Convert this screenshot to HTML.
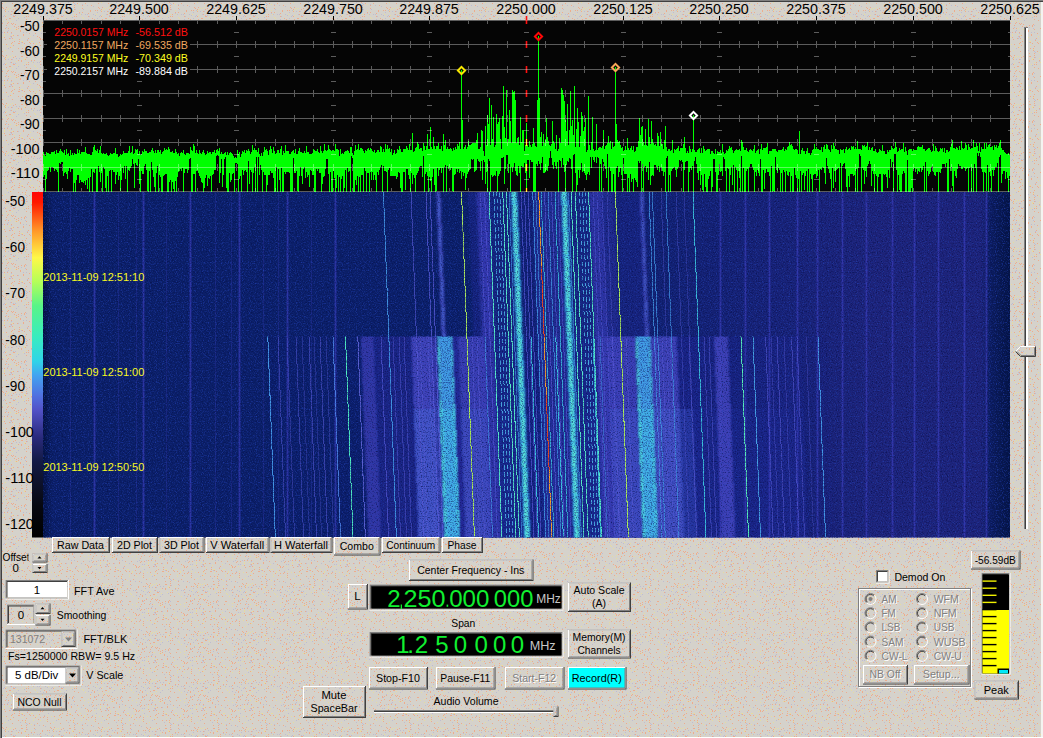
<!DOCTYPE html>
<html><head><meta charset="utf-8"><title>Spectrum</title>
<style>
html,body{margin:0;padding:0;background:#d5d0c8;overflow:hidden}
svg{display:block;font-family:"Liberation Sans",sans-serif}
text{white-space:pre}
</style></head><body>
<svg width="1043" height="738" viewBox="0 0 1043 738">
<defs><pattern id="dz" width="48" height="48" patternUnits="userSpaceOnUse"><rect width="48" height="48" fill="#d5d2cb"/><rect x="25" y="24" width="1" height="1" fill="#eeac8c"/><rect x="12" y="38" width="1" height="1" fill="#eeac8c"/><rect x="11" y="14" width="1" height="1" fill="#eeac8c"/><rect x="15" y="8" width="1" height="1" fill="#eeac8c"/><rect x="5" y="16" width="1" height="1" fill="#eeac8c"/><rect x="46" y="24" width="1" height="1" fill="#eeac8c"/><rect x="33" y="43" width="1" height="1" fill="#eeac8c"/><rect x="44" y="34" width="1" height="1" fill="#eeac8c"/><rect x="5" y="39" width="1" height="1" fill="#eeac8c"/><rect x="31" y="12" width="1" height="1" fill="#eeac8c"/><rect x="26" y="46" width="1" height="1" fill="#eeac8c"/><rect x="39" y="37" width="1" height="1" fill="#eeac8c"/><rect x="13" y="23" width="1" height="1" fill="#eeac8c"/><rect x="24" y="43" width="1" height="1" fill="#eeac8c"/><rect x="13" y="9" width="1" height="1" fill="#eeac8c"/><rect x="29" y="42" width="1" height="1" fill="#eeac8c"/><rect x="11" y="36" width="1" height="1" fill="#eeac8c"/><rect x="21" y="5" width="1" height="1" fill="#eeac8c"/><rect x="45" y="33" width="1" height="1" fill="#eeac8c"/><rect x="43" y="5" width="1" height="1" fill="#eeac8c"/><rect x="30" y="20" width="1" height="1" fill="#eeac8c"/><rect x="25" y="2" width="1" height="1" fill="#eeac8c"/><rect x="17" y="35" width="1" height="1" fill="#eeac8c"/><rect x="0" y="27" width="1" height="1" fill="#eeac8c"/><rect x="34" y="5" width="1" height="1" fill="#eeac8c"/><rect x="29" y="33" width="1" height="1" fill="#eeac8c"/><rect x="29" y="3" width="1" height="1" fill="#eeac8c"/><rect x="22" y="8" width="1" height="1" fill="#eeac8c"/><rect x="13" y="45" width="1" height="1" fill="#eeac8c"/><rect x="10" y="47" width="1" height="1" fill="#eeac8c"/><rect x="28" y="38" width="1" height="1" fill="#eeac8c"/><rect x="11" y="32" width="1" height="1" fill="#eeac8c"/><rect x="42" y="11" width="1" height="1" fill="#eeac8c"/><rect x="2" y="7" width="1" height="1" fill="#eeac8c"/><rect x="1" y="10" width="1" height="1" fill="#eeac8c"/><rect x="30" y="43" width="1" height="1" fill="#eeac8c"/><rect x="26" y="5" width="1" height="1" fill="#eeac8c"/><rect x="27" y="40" width="1" height="1" fill="#eeac8c"/><rect x="5" y="9" width="1" height="1" fill="#eeac8c"/><rect x="19" y="39" width="1" height="1" fill="#eeac8c"/><rect x="0" y="24" width="1" height="1" fill="#eeac8c"/><rect x="21" y="8" width="1" height="1" fill="#eeac8c"/><rect x="33" y="25" width="1" height="1" fill="#eeac8c"/><rect x="12" y="3" width="1" height="1" fill="#eeac8c"/><rect x="40" y="13" width="1" height="1" fill="#eeac8c"/><rect x="28" y="16" width="1" height="1" fill="#eeac8c"/><rect x="34" y="25" width="1" height="1" fill="#eeac8c"/><rect x="8" y="22" width="1" height="1" fill="#eeac8c"/><rect x="44" y="30" width="1" height="1" fill="#eeac8c"/><rect x="3" y="8" width="1" height="1" fill="#eeac8c"/><rect x="47" y="45" width="1" height="1" fill="#eeac8c"/><rect x="38" y="47" width="1" height="1" fill="#eeac8c"/><rect x="9" y="38" width="1" height="1" fill="#eeac8c"/><rect x="26" y="7" width="1" height="1" fill="#eeac8c"/><rect x="6" y="7" width="1" height="1" fill="#eeac8c"/><rect x="9" y="18" width="1" height="1" fill="#eeac8c"/><rect x="11" y="11" width="1" height="1" fill="#eeac8c"/><rect x="26" y="9" width="1" height="1" fill="#eeac8c"/><rect x="13" y="35" width="1" height="1" fill="#eeac8c"/><rect x="20" y="31" width="1" height="1" fill="#eeac8c"/><rect x="14" y="16" width="1" height="1" fill="#eeac8c"/><rect x="7" y="23" width="1" height="1" fill="#eeac8c"/><rect x="11" y="43" width="1" height="1" fill="#eeac8c"/><rect x="4" y="32" width="1" height="1" fill="#eeac8c"/><rect x="18" y="0" width="1" height="1" fill="#eeac8c"/><rect x="37" y="3" width="1" height="1" fill="#eeac8c"/><rect x="21" y="13" width="1" height="1" fill="#eeac8c"/><rect x="24" y="25" width="1" height="1" fill="#eeac8c"/><rect x="21" y="25" width="1" height="1" fill="#eeac8c"/><rect x="24" y="26" width="1" height="1" fill="#eeac8c"/><rect x="23" y="34" width="1" height="1" fill="#eeac8c"/><rect x="5" y="11" width="1" height="1" fill="#eeac8c"/><rect x="2" y="23" width="1" height="1" fill="#eeac8c"/><rect x="46" y="25" width="1" height="1" fill="#eeac8c"/><rect x="28" y="14" width="1" height="1" fill="#eeac8c"/><rect x="19" y="41" width="1" height="1" fill="#eeac8c"/><rect x="14" y="41" width="1" height="1" fill="#eeac8c"/><rect x="46" y="19" width="1" height="1" fill="#eeac8c"/><rect x="6" y="44" width="1" height="1" fill="#eeac8c"/><rect x="46" y="20" width="1" height="1" fill="#eeac8c"/><rect x="43" y="45" width="1" height="1" fill="#eeac8c"/><rect x="15" y="24" width="1" height="1" fill="#eeac8c"/><rect x="18" y="28" width="1" height="1" fill="#eeac8c"/><rect x="5" y="28" width="1" height="1" fill="#eeac8c"/><rect x="26" y="16" width="1" height="1" fill="#eeac8c"/><rect x="18" y="43" width="1" height="1" fill="#eeac8c"/><rect x="20" y="30" width="1" height="1" fill="#eeac8c"/><rect x="34" y="8" width="1" height="1" fill="#eeac8c"/><rect x="16" y="27" width="1" height="1" fill="#eeac8c"/><rect x="18" y="26" width="1" height="1" fill="#eeac8c"/><rect x="42" y="39" width="1" height="1" fill="#eeac8c"/><rect x="10" y="18" width="1" height="1" fill="#eeac8c"/><rect x="43" y="38" width="1" height="1" fill="#eeac8c"/><rect x="39" y="42" width="1" height="1" fill="#eeac8c"/><rect x="45" y="28" width="1" height="1" fill="#eeac8c"/><rect x="12" y="24" width="1" height="1" fill="#eeac8c"/><rect x="21" y="12" width="1" height="1" fill="#eeac8c"/><rect x="22" y="0" width="1" height="1" fill="#eeac8c"/><rect x="42" y="22" width="1" height="1" fill="#eeac8c"/><rect x="44" y="18" width="1" height="1" fill="#eeac8c"/><rect x="12" y="42" width="1" height="1" fill="#eeac8c"/><rect x="42" y="10" width="1" height="1" fill="#eeac8c"/><rect x="40" y="16" width="1" height="1" fill="#eeac8c"/><rect x="42" y="26" width="1" height="1" fill="#eeac8c"/><rect x="14" y="26" width="1" height="1" fill="#eeac8c"/><rect x="22" y="42" width="1" height="1" fill="#eeac8c"/><rect x="25" y="0" width="1" height="1" fill="#eeac8c"/><rect x="7" y="32" width="1" height="1" fill="#eeac8c"/><rect x="34" y="12" width="1" height="1" fill="#eeac8c"/><rect x="0" y="33" width="1" height="1" fill="#eeac8c"/><rect x="19" y="43" width="1" height="1" fill="#eeac8c"/><rect x="47" y="10" width="1" height="1" fill="#eeac8c"/><rect x="32" y="28" width="1" height="1" fill="#eeac8c"/><rect x="13" y="16" width="1" height="1" fill="#eeac8c"/><rect x="47" y="47" width="1" height="1" fill="#eeac8c"/><rect x="26" y="29" width="1" height="1" fill="#eeac8c"/><rect x="35" y="33" width="1" height="1" fill="#eeac8c"/><rect x="40" y="39" width="1" height="1" fill="#eeac8c"/><rect x="40" y="38" width="1" height="1" fill="#eeac8c"/><rect x="18" y="12" width="1" height="1" fill="#eeac8c"/><rect x="47" y="1" width="1" height="1" fill="#eeac8c"/><rect x="6" y="19" width="1" height="1" fill="#eeac8c"/><rect x="4" y="37" width="1" height="1" fill="#eeac8c"/><rect x="2" y="3" width="1" height="1" fill="#eeac8c"/><rect x="26" y="19" width="1" height="1" fill="#eeac8c"/><rect x="23" y="35" width="1" height="1" fill="#eeac8c"/><rect x="40" y="45" width="1" height="1" fill="#eeac8c"/><rect x="37" y="36" width="1" height="1" fill="#eeac8c"/><rect x="6" y="25" width="1" height="1" fill="#eeac8c"/><rect x="25" y="11" width="1" height="1" fill="#eeac8c"/><rect x="16" y="29" width="1" height="1" fill="#eeac8c"/><rect x="8" y="28" width="1" height="1" fill="#eeac8c"/><rect x="44" y="44" width="1" height="1" fill="#eeac8c"/><rect x="35" y="45" width="1" height="1" fill="#eeac8c"/><rect x="11" y="23" width="1" height="1" fill="#eeac8c"/><rect x="16" y="13" width="1" height="1" fill="#e6dca0"/><rect x="17" y="29" width="1" height="1" fill="#e6dca0"/><rect x="36" y="44" width="1" height="1" fill="#e6dca0"/><rect x="24" y="11" width="1" height="1" fill="#e6dca0"/><rect x="30" y="36" width="1" height="1" fill="#e6dca0"/><rect x="40" y="30" width="1" height="1" fill="#e6dca0"/><rect x="4" y="34" width="1" height="1" fill="#e6dca0"/><rect x="15" y="29" width="1" height="1" fill="#e6dca0"/><rect x="33" y="0" width="1" height="1" fill="#e6dca0"/><rect x="7" y="21" width="1" height="1" fill="#e6dca0"/><rect x="31" y="4" width="1" height="1" fill="#e6dca0"/><rect x="21" y="41" width="1" height="1" fill="#e6dca0"/><rect x="46" y="0" width="1" height="1" fill="#e6dca0"/><rect x="36" y="43" width="1" height="1" fill="#e6dca0"/><rect x="34" y="17" width="1" height="1" fill="#e6dca0"/><rect x="40" y="0" width="1" height="1" fill="#e6dca0"/><rect x="37" y="20" width="1" height="1" fill="#e6dca0"/><rect x="10" y="8" width="1" height="1" fill="#e6dca0"/><rect x="3" y="21" width="1" height="1" fill="#e6dca0"/><rect x="32" y="14" width="1" height="1" fill="#e6dca0"/><rect x="35" y="18" width="1" height="1" fill="#e6dca0"/><rect x="10" y="28" width="1" height="1" fill="#e6dca0"/><rect x="3" y="44" width="1" height="1" fill="#e6dca0"/><rect x="26" y="14" width="1" height="1" fill="#e6dca0"/><rect x="12" y="7" width="1" height="1" fill="#e6dca0"/><rect x="31" y="10" width="1" height="1" fill="#e6dca0"/><rect x="17" y="17" width="1" height="1" fill="#e6dca0"/><rect x="42" y="23" width="1" height="1" fill="#e6dca0"/><rect x="4" y="35" width="1" height="1" fill="#e6dca0"/><rect x="12" y="35" width="1" height="1" fill="#e6dca0"/><rect x="11" y="44" width="1" height="1" fill="#e6dca0"/><rect x="22" y="41" width="1" height="1" fill="#e6dca0"/><rect x="47" y="43" width="1" height="1" fill="#e6dca0"/><rect x="7" y="46" width="1" height="1" fill="#e6dca0"/><rect x="8" y="8" width="1" height="1" fill="#e6dca0"/><rect x="9" y="34" width="1" height="1" fill="#e6dca0"/><rect x="5" y="2" width="1" height="1" fill="#e6dca0"/><rect x="32" y="41" width="1" height="1" fill="#e6dca0"/><rect x="24" y="10" width="1" height="1" fill="#e6dca0"/><rect x="22" y="45" width="1" height="1" fill="#e6dca0"/><rect x="14" y="39" width="1" height="1" fill="#e6dca0"/><rect x="38" y="39" width="1" height="1" fill="#e6dca0"/><rect x="10" y="21" width="1" height="1" fill="#e6dca0"/><rect x="40" y="27" width="1" height="1" fill="#e6dca0"/><rect x="12" y="19" width="1" height="1" fill="#e6dca0"/><rect x="11" y="47" width="1" height="1" fill="#e6dca0"/><rect x="7" y="9" width="1" height="1" fill="#e6dca0"/><rect x="31" y="41" width="1" height="1" fill="#e6dca0"/><rect x="33" y="46" width="1" height="1" fill="#e6dca0"/><rect x="0" y="14" width="1" height="1" fill="#e6dca0"/><rect x="6" y="15" width="1" height="1" fill="#e6dca0"/><rect x="36" y="28" width="1" height="1" fill="#e6dca0"/><rect x="46" y="38" width="1" height="1" fill="#e6dca0"/><rect x="5" y="10" width="1" height="1" fill="#e6dca0"/><rect x="23" y="16" width="1" height="1" fill="#e6dca0"/><rect x="20" y="37" width="1" height="1" fill="#e6dca0"/><rect x="2" y="37" width="1" height="1" fill="#e6dca0"/><rect x="25" y="1" width="1" height="1" fill="#e6dca0"/><rect x="19" y="10" width="1" height="1" fill="#bebcd2"/><rect x="8" y="0" width="1" height="1" fill="#bebcd2"/><rect x="18" y="35" width="1" height="1" fill="#bebcd2"/><rect x="18" y="18" width="1" height="1" fill="#bebcd2"/><rect x="7" y="31" width="1" height="1" fill="#bebcd2"/><rect x="27" y="4" width="1" height="1" fill="#bebcd2"/><rect x="2" y="22" width="1" height="1" fill="#bebcd2"/><rect x="10" y="38" width="1" height="1" fill="#bebcd2"/><rect x="43" y="20" width="1" height="1" fill="#bebcd2"/><rect x="21" y="42" width="1" height="1" fill="#bebcd2"/><rect x="20" y="2" width="1" height="1" fill="#bebcd2"/><rect x="24" y="17" width="1" height="1" fill="#bebcd2"/><rect x="39" y="14" width="1" height="1" fill="#bebcd2"/><rect x="35" y="9" width="1" height="1" fill="#bebcd2"/><rect x="44" y="43" width="1" height="1" fill="#bebcd2"/><rect x="1" y="18" width="1" height="1" fill="#bebcd2"/><rect x="47" y="25" width="1" height="1" fill="#bebcd2"/><rect x="26" y="32" width="1" height="1" fill="#bebcd2"/><rect x="45" y="14" width="1" height="1" fill="#bebcd2"/><rect x="11" y="33" width="1" height="1" fill="#bebcd2"/><rect x="26" y="3" width="1" height="1" fill="#bebcd2"/><rect x="13" y="15" width="1" height="1" fill="#bebcd2"/><rect x="41" y="16" width="1" height="1" fill="#bebcd2"/><rect x="10" y="36" width="1" height="1" fill="#bebcd2"/><rect x="6" y="27" width="1" height="1" fill="#bebcd2"/><rect x="0" y="36" width="1" height="1" fill="#bebcd2"/><rect x="1" y="12" width="1" height="1" fill="#bebcd2"/><rect x="8" y="11" width="1" height="1" fill="#bebcd2"/><rect x="40" y="19" width="1" height="1" fill="#bebcd2"/><rect x="3" y="16" width="1" height="1" fill="#bebcd2"/><rect x="11" y="37" width="1" height="1" fill="#bebcd2"/><rect x="27" y="9" width="1" height="1" fill="#bebcd2"/><rect x="0" y="41" width="1" height="1" fill="#bebcd2"/><rect x="2" y="32" width="1" height="1" fill="#bebcd2"/><rect x="25" y="28" width="1" height="1" fill="#bebcd2"/><rect x="4" y="10" width="1" height="1" fill="#bebcd2"/><rect x="37" y="14" width="1" height="1" fill="#bebcd2"/><rect x="21" y="27" width="1" height="1" fill="#bebcd2"/><rect x="8" y="30" width="1" height="1" fill="#bebcd2"/><rect x="39" y="5" width="1" height="1" fill="#bebcd2"/><rect x="23" y="32" width="1" height="1" fill="#bebcd2"/><rect x="10" y="14" width="1" height="1" fill="#bebcd2"/><rect x="46" y="36" width="1" height="1" fill="#bebcd2"/><rect x="31" y="13" width="1" height="1" fill="#bebcd2"/><rect x="45" y="6" width="1" height="1" fill="#bebcd2"/><rect x="27" y="39" width="1" height="1" fill="#bebcd2"/><rect x="12" y="11" width="1" height="1" fill="#bebcd2"/><rect x="47" y="15" width="1" height="1" fill="#bebcd2"/><rect x="16" y="10" width="1" height="1" fill="#bebcd2"/><rect x="41" y="33" width="1" height="1" fill="#bebcd2"/><rect x="43" y="32" width="1" height="1" fill="#bebcd2"/><rect x="34" y="4" width="1" height="1" fill="#bebcd2"/><rect x="15" y="15" width="1" height="1" fill="#bebcd2"/><rect x="33" y="14" width="1" height="1" fill="#bebcd2"/><rect x="26" y="25" width="1" height="1" fill="#bebcd2"/><rect x="33" y="35" width="1" height="1" fill="#bebcd2"/><rect x="4" y="15" width="1" height="1" fill="#bebcd2"/><rect x="16" y="20" width="1" height="1" fill="#bebcd2"/></pattern></defs>
<rect x="0" y="0" width="1043" height="738" fill="url(#dz)"/>
<rect x="0" y="0" width="1043" height="1" fill="#808080"/>
<rect x="0" y="0" width="1" height="738" fill="#808080"/>
<rect x="1" y="1" width="1042" height="1" fill="#404040"/>
<rect x="1" y="1" width="1" height="737" fill="#404040"/>
<rect x="1041" y="2" width="2" height="736" fill="#f4f3f0"/>
<rect x="2" y="737" width="1041" height="1" fill="#ffffff"/>
<g font-size="14.67">
<text x="43" y="14.1" font-size="15.4" fill="#000" text-anchor="middle" textLength="59.6" lengthAdjust="spacingAndGlyphs">2249.375</text>
<rect x="43" y="16" width="1" height="4" fill="#000"/>
<text x="139" y="14.1" font-size="15.4" fill="#000" text-anchor="middle" textLength="59.6" lengthAdjust="spacingAndGlyphs">2249.500</text>
<rect x="139" y="16" width="1" height="4" fill="#000"/>
<text x="236" y="14.1" font-size="15.4" fill="#000" text-anchor="middle" textLength="59.6" lengthAdjust="spacingAndGlyphs">2249.625</text>
<rect x="236" y="16" width="1" height="4" fill="#000"/>
<text x="333" y="14.1" font-size="15.4" fill="#000" text-anchor="middle" textLength="59.6" lengthAdjust="spacingAndGlyphs">2249.750</text>
<rect x="333" y="16" width="1" height="4" fill="#000"/>
<text x="429" y="14.1" font-size="15.4" fill="#000" text-anchor="middle" textLength="59.6" lengthAdjust="spacingAndGlyphs">2249.875</text>
<rect x="429" y="16" width="1" height="4" fill="#000"/>
<text x="526" y="14.1" font-size="15.4" fill="#000" text-anchor="middle" textLength="59.6" lengthAdjust="spacingAndGlyphs">2250.000</text>
<rect x="526" y="16" width="1" height="4" fill="#000"/>
<text x="623" y="14.1" font-size="15.4" fill="#000" text-anchor="middle" textLength="59.6" lengthAdjust="spacingAndGlyphs">2250.125</text>
<rect x="623" y="16" width="1" height="4" fill="#000"/>
<text x="719" y="14.1" font-size="15.4" fill="#000" text-anchor="middle" textLength="59.6" lengthAdjust="spacingAndGlyphs">2250.250</text>
<rect x="719" y="16" width="1" height="4" fill="#000"/>
<text x="816" y="14.1" font-size="15.4" fill="#000" text-anchor="middle" textLength="59.6" lengthAdjust="spacingAndGlyphs">2250.375</text>
<rect x="816" y="16" width="1" height="4" fill="#000"/>
<text x="913" y="14.1" font-size="15.4" fill="#000" text-anchor="middle" textLength="59.6" lengthAdjust="spacingAndGlyphs">2250.500</text>
<rect x="913" y="16" width="1" height="4" fill="#000"/>
<text x="1010" y="14.1" font-size="15.4" fill="#000" text-anchor="middle" textLength="59.6" lengthAdjust="spacingAndGlyphs">2250.625</text>
<rect x="1010" y="16" width="1" height="4" fill="#000"/>
<text x="39.6" y="31.2" font-size="15.4" fill="#000" text-anchor="end" textLength="19.7" lengthAdjust="spacingAndGlyphs">-50</text>
<text x="39.6" y="55.7" font-size="15.4" fill="#000" text-anchor="end" textLength="19.7" lengthAdjust="spacingAndGlyphs">-60</text>
<text x="39.6" y="80.2" font-size="15.4" fill="#000" text-anchor="end" textLength="19.7" lengthAdjust="spacingAndGlyphs">-70</text>
<text x="39.6" y="104.7" font-size="15.4" fill="#000" text-anchor="end" textLength="19.7" lengthAdjust="spacingAndGlyphs">-80</text>
<text x="39.6" y="129.2" font-size="15.4" fill="#000" text-anchor="end" textLength="19.7" lengthAdjust="spacingAndGlyphs">-90</text>
<text x="39.6" y="153.7" font-size="15.4" fill="#000" text-anchor="end" textLength="28.8" lengthAdjust="spacingAndGlyphs">-100</text>
<text x="39.6" y="178.2" font-size="15.4" fill="#000" text-anchor="end" textLength="28.8" lengthAdjust="spacingAndGlyphs">-110</text>
</g>
<rect x="43" y="20" width="967" height="172" fill="#050505"/>
<clipPath id="cp"><rect x="43" y="20" width="967" height="172"/></clipPath>
<g clip-path="url(#cp)">
<path d="M43.5 152.37V177.21M44.5 155.2V175.18M45.5 155.97V193M46.5 151.94V178.89M47.5 153.47V171.28M48.5 153.05V169.77M49.5 154.31V167.13M50.5 153.55V171.83M51.5 152.3V167.12M52.5 152.44V166.59M53.5 152.33V168.25M54.5 151.45V171.39M55.5 154.09V169.08M56.5 149.61V170.41M57.5 153.38V172.1M58.5 152.97V193M59.5 151.48V163.11M60.5 149.09V164M61.5 151.24V162.3M62.5 151.65V162.46M63.5 153.36V176.32M64.5 149.58V173.06M65.5 154.6V171.53M66.5 148.99V174.02M67.5 153.53V179.36M68.5 152.54V171.33M69.5 156.16V168.31M70.5 150.01V171.83M71.5 154.7V169.42M72.5 152.95V169.07M73.5 155.02V193M74.5 153.11V182.69M75.5 153.64V193M76.5 153.84V180.2M77.5 148.76V175.41M78.5 152.94V175.14M79.5 149.99V183.32M80.5 154.04V180.29M81.5 152.48V182.07M82.5 151.92V181.73M83.5 152.31V183.45M84.5 152.47V181.49M85.5 147.26V184.52M86.5 152.89V179.81M87.5 154.23V189.22M88.5 154V178.01M89.5 153.51V193M90.5 154.59V176.78M91.5 154.95V168.52M92.5 151.61V193M93.5 147.23V171.72M94.5 145.48V172.85M95.5 150.09V168.7M96.5 150.59V193M97.5 149.25V193M98.5 152.72V165.64M99.5 150.4V172.22M100.5 145.99V182.31M101.5 152.79V173.47M102.5 153.94V193M103.5 153.19V166.83M104.5 154.33V168.81M105.5 153.96V188.07M106.5 152.75V193M107.5 154.52V176.28M108.5 155.99V193M109.5 154.64V170.71M110.5 152.51V170.31M111.5 154.04V193M112.5 153.96V170.11M113.5 152.96V171.74M114.5 152.65V171.56M115.5 148.22V183.71M116.5 154.28V174.56M117.5 153.51V172.32M118.5 157.49V179.68M119.5 155.96V175.56M120.5 153.72V191.35M121.5 154.7V179.66M122.5 153.6V167.83M123.5 150.78V172.66M124.5 152.9V165.56M125.5 153.15V179.37M126.5 152.82V166.48M127.5 153.32V193M128.5 150.79V170.43M129.5 145.7V170.98M130.5 153.07V167.94M131.5 151.88V166.04M132.5 145.68V158.97M133.5 153.78V164.32M134.5 152.8V188.15M135.5 149.1V163.41M136.5 150.15V164.76M137.5 148.63V165.79M138.5 154.07V159.07M139.5 151.42V184.12M140.5 155.27V193M141.5 154.34V171.06M142.5 151.09V174.37M143.5 151.78V173.94M144.5 148.9V165.87M145.5 151.3V163.61M146.5 151.21V169.6M147.5 152.72V191.43M148.5 153.01V193M149.5 152.23V170.73M150.5 152.05V193M151.5 150.34V161.98M152.5 147.84V170.32M153.5 150.82V176.98M154.5 153.39V186.66M155.5 149.59V193M156.5 152.82V173.48M157.5 150.11V166.46M158.5 150.36V193M159.5 152.35V175.02M160.5 149.66V177.01M161.5 154.02V193M162.5 151.63V193M163.5 150.91V176.16M164.5 148.17V175.34M165.5 150.03V174.12M166.5 148.75V173.58M167.5 149.5V193M168.5 146.9V191.75M169.5 149.17V182.09M170.5 152.33V179.81M171.5 151.84V193M172.5 151.23V182.17M173.5 153.48V189.12M174.5 152.9V193M175.5 149.16V180.75M176.5 151.92V193M177.5 153.64V177M178.5 153.07V172.35M179.5 155.62V170.97M180.5 153.16V168.68M181.5 151.63V170.64M182.5 153.47V167.68M183.5 150.08V193M184.5 154.46V173.33M185.5 154.77V168.92M186.5 152.69V169.33M187.5 153.03V172.53M188.5 152.63V169.95M189.5 154.44V159.44M190.5 147.29V157.78M191.5 150.48V191.53M192.5 150.91V193M193.5 144.49V173.7M194.5 146.36V174.43M195.5 153.27V193M196.5 149.62V171.05M197.5 153.12V170.18M198.5 153.96V172.93M199.5 150.09V176.15M200.5 152.52V177.53M201.5 153.78V182.09M202.5 152.1V182.97M203.5 149.98V193M204.5 153.01V188.12M205.5 154.82V178.07M206.5 153.91V174.72M207.5 150.95V186.25M208.5 152.5V177.61M209.5 151.83V179.49M210.5 151.59V175.68M211.5 153.71V193M212.5 151.88V174.52M213.5 152.31V174.1M214.5 149.77V170.33M215.5 152.88V170.1M216.5 150.26V156.17M217.5 149.15V154.84M218.5 151.21V156.21M219.5 147.5V183.26M220.5 153.82V173.28M221.5 151.79V158.67M222.5 154.31V186.89M223.5 154.44V174.89M224.5 152.96V159.1M225.5 151.94V156.94M226.5 154.89V187.79M227.5 152.11V193M228.5 155.19V191.63M229.5 152.93V172.84M230.5 152.03V181.98M231.5 153.29V180.21M232.5 154.14V174.49M233.5 155.69V173.12M234.5 157.95V193M235.5 157.45V162.74M236.5 157.61V162.61M237.5 149.79V164.06M238.5 153.76V191.85M239.5 152.44V178.63M240.5 156.56V176.25M241.5 153.59V193M242.5 151.41V170.01M243.5 152.18V174.74M244.5 150.33V170.86M245.5 152.5V170.13M246.5 150.4V171.6M247.5 150.57V193M248.5 149.32V161.11M249.5 151.44V183.66M250.5 154.18V169.82M251.5 152.31V172.05M252.5 144.94V193M253.5 150.11V172.57M254.5 148.01V166.65M255.5 150.07V193M256.5 149.54V156.84M257.5 152.42V193M258.5 148.32V157.45M259.5 154.49V175.2M260.5 155.92V165.17M261.5 153.35V169.68M262.5 155.7V193M263.5 151.76V171.89M264.5 146.66V175.34M265.5 150.38V175.33M266.5 148.99V193M267.5 151.22V184.8M268.5 154.74V174.98M269.5 150.05V175.29M270.5 145.7V170.74M271.5 149.4V172.82M272.5 153.44V172.64M273.5 147.1V178.27M274.5 150.94V193M275.5 154.43V193M276.5 153.4V167.23M277.5 149.52V193M278.5 149.85V168.77M279.5 152.63V180.16M280.5 148.78V193M281.5 146.24V168.33M282.5 154.65V193M283.5 150.75V193M284.5 152.51V172.46M285.5 144.72V173.82M286.5 151.17V172.37M287.5 151.3V171.59M288.5 150.79V171.67M289.5 153.51V172.5M290.5 154.34V193M291.5 152.12V193M292.5 150.69V193M293.5 149.96V157.54M294.5 152.56V172.7M295.5 149.22V172.82M296.5 153.76V171.17M297.5 154.04V190.54M298.5 151.23V191.5M299.5 148.11V176.25M300.5 151.83V166.64M301.5 152.31V175.51M302.5 153.15V184.06M303.5 153.24V169.46M304.5 151.42V167.39M305.5 152.63V178.47M306.5 145.63V172.36M307.5 151.9V176.57M308.5 152.09V174.64M309.5 153.58V186.86M310.5 153.97V169.6M311.5 153.69V171.2M312.5 153.21V175.38M313.5 149.35V174.57M314.5 149.96V193M315.5 150.97V193M316.5 150.91V169.16M317.5 149.39V170.63M318.5 152.03V168.51M319.5 153.47V172.88M320.5 146V173.16M321.5 151.14V193M322.5 152.51V184.07M323.5 150.92V177.07M324.5 143.52V175.76M325.5 149.82V169.4M326.5 151.11V159.23M327.5 149.53V158.78M328.5 145.28V174.24M329.5 149.19V193M330.5 150.34V171.58M331.5 150.58V193M332.5 150.15V193M333.5 150.24V171.25M334.5 151.49V177.55M335.5 144.31V193M336.5 148.87V188.09M337.5 148.56V174.74M338.5 150.14V193M339.5 155.52V176.62M340.5 148.63V193M341.5 153.56V178.96M342.5 153.1V176.25M343.5 153.66V193M344.5 152.48V188.28M345.5 151.16V170.13M346.5 150.57V193M347.5 149.51V167.87M348.5 150.72V171.51M349.5 152.93V170.53M350.5 146.82V193M351.5 146.96V155.72M352.5 152.76V157.76M353.5 154.52V193M354.5 151.09V193M355.5 145.33V180.39M356.5 150.49V185.47M357.5 149.37V176.46M358.5 143.89V193M359.5 150.05V177.25M360.5 148.06V193M361.5 148.46V175.41M362.5 149.47V175.05M363.5 151.08V193M364.5 152.52V168.14M365.5 150.08V170.7M366.5 150.77V193M367.5 149.48V173.18M368.5 147.78V173.22M369.5 150.44V193M370.5 147.55V171.69M371.5 148.95V179.95M372.5 151.08V172.25M373.5 152.15V179.62M374.5 150.02V174.55M375.5 152.57V179.66M376.5 152.19V193M377.5 149.98V171.58M378.5 149.94V175.35M379.5 151.7V170.2M380.5 145.86V167.06M381.5 147.1V164.61M382.5 151.56V193M383.5 149.08V166.45M384.5 151.8V170.91M385.5 143.91V171.4M386.5 149.48V171.57M387.5 144.87V193M388.5 148.59V169.66M389.5 148.03V168.03M390.5 151.79V176.22M391.5 148.93V176.24M392.5 154.7V175.99M393.5 153.37V176M394.5 149.99V176.49M395.5 153.6V175.81M396.5 153.02V179.16M397.5 149.28V176.83M398.5 149.62V172.15M399.5 146.35V172.86M400.5 149.01V187.83M401.5 152.3V193M402.5 151.88V193M403.5 149.46V171.59M404.5 149.22V171.75M405.5 148.83V190.11M406.5 145.76V168.92M407.5 148.18V168.76M408.5 150.25V174.99M409.5 143.61V179.05M410.5 149.65V193M411.5 150.38V173.48M412.5 133V184.44M413.5 152.15V175.36M414.5 151.34V177.69M415.5 148.12V193M416.5 146.89V174.85M417.5 141.72V173.18M418.5 143.93V171.45M419.5 148.99V167.03M420.5 147.78V165.78M421.5 148.13V165.56M422.5 150.8V177.42M423.5 143.27V155.87M424.5 145.92V193M425.5 149.57V174.4M426.5 145.85V172.18M427.5 133.87V175.63M428.5 149.15V191.57M429.5 148.51V176.64M430.5 127V180.7M431.5 146.88V193M432.5 149.45V176.51M433.5 137.44V169.35M434.5 145.52V184.64M435.5 148.55V193M436.5 146.38V190.98M437.5 146.21V167.89M438.5 143V175.79M439.5 149.09V169.93M440.5 148.7V167.69M441.5 146.18V173.3M442.5 151.33V168.24M443.5 134V193M444.5 144.81V167.26M445.5 140.1V164.66M446.5 148.86V193M447.5 147.09V165.53M448.5 149.03V169.12M449.5 148.58V167.98M450.5 148.15V169.87M451.5 149.21V168.26M452.5 151.26V191.05M453.5 148.04V193M454.5 149.52V174.5M455.5 147.19V173.59M456.5 148.61V169.49M457.5 144.44V171.83M458.5 145.77V168.86M459.5 142.31V172.51M460.5 148.87V171.09M461.5 70V178.66M462.5 120V172.08M463.5 149.18V175.9M464.5 147.35V172.89M465.5 144.83V189.82M466.5 149.42V177.63M467.5 146.6V173.79M468.5 140.65V171.8M469.5 144.77V169.62M470.5 145.12V169.42M471.5 144.44V158.69M472.5 143.32V159.66M473.5 143.05V159.19M474.5 142.74V171.68M475.5 142.97V170.97M476.5 139.57V169.98M477.5 133V159.48M478.5 148.66V160.74M479.5 149.16V161.93M480.5 147.03V170.58M481.5 130V161.49M482.5 131.14V180.36M483.5 151.13V160.35M484.5 155.76V161.94M485.5 126V184.28M486.5 144.65V171.97M487.5 115.18V193M488.5 124.31V159.32M489.5 98V160.95M490.5 144.51V193M491.5 105.2V174.78M492.5 139.01V176.5M493.5 116.82V176.33M494.5 146.57V175.2M495.5 145.22V175.93M496.5 114V171.12M497.5 124.14V193M498.5 121.83V176.16M499.5 118V173.77M500.5 139.17V170.75M501.5 148.76V157.95M502.5 116.12V157.74M503.5 86V156.92M504.5 127.3V183.9M505.5 137.67V169.33M506.5 90.41V154.74M507.5 141.52V154.58M508.5 139.02V172.75M509.5 110V164.03M510.5 121.02V193M511.5 142.94V167.4M512.5 90V172.21M513.5 92V166.84M514.5 91V162.67M515.5 100V171.01M516.5 142.98V174.66M517.5 137.98V175.79M518.5 137.32V166.1M519.5 144.88V172.81M520.5 117V193M521.5 141.69V165.89M522.5 130.17V166.59M523.5 130V167M524.5 150.84V162.63M525.5 144.56V172.54M526.5 123.02V193M527.5 145.12V160.11M528.5 146.64V159.91M529.5 140.56V178.08M530.5 145.14V160.34M531.5 146.64V161.96M532.5 144.24V161.61M533.5 128V193M534.5 143.38V193M535.5 146.13V193M536.5 147.15V163.88M537.5 100V165.9M538.5 37V161.41M539.5 98V163.71M540.5 136.54V170.28M541.5 131.9V162.93M542.5 146.44V156.99M543.5 134.03V172.62M544.5 142.57V172.94M545.5 139.74V172.47M546.5 118V170.33M547.5 137.19V170.93M548.5 140.75V166.05M549.5 145.49V157.96M550.5 146.14V151.14M551.5 144.28V157.74M552.5 121.35V165.26M553.5 140.57V169.37M554.5 143.02V162.12M555.5 149.06V166.43M556.5 134.51V169.07M557.5 151.46V162.28M558.5 148.57V193M559.5 138.46V159.8M560.5 142.6V160.53M561.5 88V166.87M562.5 90V158.01M563.5 95V164.8M564.5 101V171.91M565.5 120.41V193M566.5 130.5V165.48M567.5 104V161.36M568.5 145V162.36M569.5 130.16V157.51M570.5 91V158.59M571.5 125.89V168.84M572.5 120.22V191.96M573.5 134.97V155.13M574.5 86V154.23M575.5 147.08V172.65M576.5 129.41V193M577.5 108V185.47M578.5 122.35V169.78M579.5 147.43V177.6M580.5 136.21V170.21M581.5 112V163.45M582.5 115.74V172.49M583.5 130.92V170.56M584.5 126.57V172.58M585.5 118V175.23M586.5 151.66V180.4M587.5 149.79V173.82M588.5 96V171.59M589.5 145.14V174.83M590.5 149.76V156.83M591.5 142.14V167.94M592.5 117V157.35M593.5 149.39V159.86M594.5 151.34V162.27M595.5 150.07V156.91M596.5 124V163.12M597.5 150.22V156.62M598.5 147.92V157.55M599.5 147.37V190.55M600.5 147.18V163.55M601.5 147.82V193M602.5 145.58V158.94M603.5 130V161.81M604.5 148.56V166.42M605.5 146.45V168.95M606.5 145.31V178.24M607.5 142.58V154.31M608.5 136V193M609.5 143.01V167.36M610.5 140.74V170.67M611.5 149.4V193M612.5 142.31V193M613.5 146.7V174.19M614.5 145.94V193M615.5 68V193M616.5 124V167.61M617.5 140.12V165.89M618.5 141.58V177.12M619.5 141.27V171.5M620.5 144.92V168.33M621.5 147.56V174.53M622.5 147.17V193M623.5 150.7V157.62M624.5 149.74V174.39M625.5 146.32V173.98M626.5 150.09V174.47M627.5 138V193M628.5 148.01V177.81M629.5 150.44V191.52M630.5 148.31V173.82M631.5 145.78V182.37M632.5 149.77V179.23M633.5 145.91V193M634.5 152.03V177.77M635.5 150.63V179.61M636.5 146.59V182.28M637.5 146.87V187.22M638.5 141.23V160.53M639.5 118V163.19M640.5 134.6V160.57M641.5 127V193M642.5 126V164.28M643.5 142.3V193M644.5 145.12V167.05M645.5 129.07V165.89M646.5 144.92V172.2M647.5 146.43V168.26M648.5 119V179.72M649.5 137.49V161.86M650.5 143.67V184.75M651.5 121V175.96M652.5 138.62V174.58M653.5 143.26V175.66M654.5 144.84V165.31M655.5 144.33V164.59M656.5 145.65V167.05M657.5 133V169.8M658.5 135.61V166.38M659.5 146.37V172.18M660.5 132V167.31M661.5 143.53V167.6M662.5 143.73V171.22M663.5 149.4V176.37M664.5 139.92V171.58M665.5 126V193M666.5 147.14V158M667.5 151.49V156.49M668.5 148.74V193M669.5 149.13V175.38M670.5 151.21V193M671.5 150.35V170.53M672.5 140V168.89M673.5 152.65V168.02M674.5 148.85V166.74M675.5 150.15V170.24M676.5 149.26V176.98M677.5 148.44V169.1M678.5 146.32V166.78M679.5 150.8V160.39M680.5 147.64V160.99M681.5 148.4V160.35M682.5 147.56V162.06M683.5 143.82V193M684.5 137V170.09M685.5 148.23V161.77M686.5 153.31V161.47M687.5 151V161.09M688.5 152.62V193M689.5 145.95V171.76M690.5 148.78V167.74M691.5 152.13V170.41M692.5 149.29V165.52M693.5 116V193M694.5 149.73V161.34M695.5 152.34V157.34M696.5 152.31V164.1M697.5 150.38V173.36M698.5 149.27V179.59M699.5 147.7V170.87M700.5 153.14V185.15M701.5 147.62V175.02M702.5 152.71V190.02M703.5 145.86V193M704.5 148.78V174.11M705.5 151.08V186.78M706.5 150.05V193M707.5 148.96V193M708.5 149.14V178.96M709.5 149.14V175.99M710.5 153.93V171.36M711.5 150.84V193M712.5 151.2V187.48M713.5 152.79V158.73M714.5 153.54V159.33M715.5 148.87V171.55M716.5 154.05V193M717.5 150.76V193M718.5 151.82V174.84M719.5 151.93V164.24M720.5 150.07V171.55M721.5 152.63V170.57M722.5 144.39V176.34M723.5 152.29V157.29M724.5 153.75V158.75M725.5 152.8V170.85M726.5 150.39V193M727.5 150.85V167.61M728.5 148.96V169.16M729.5 145.78V193M730.5 148.31V175.4M731.5 146.98V167.49M732.5 150.3V185.05M733.5 152.73V164.61M734.5 150.66V193M735.5 150.3V166.86M736.5 148.76V170M737.5 149.61V193M738.5 149.99V170.51M739.5 149.24V177.82M740.5 150.77V193M741.5 139.97V156.25M742.5 141.56V193M743.5 146.84V167.76M744.5 150.47V193M745.5 150.2V193M746.5 147.97V171.38M747.5 150.58V168.97M748.5 152.3V193M749.5 149.91V167.1M750.5 148.68V164.4M751.5 149.8V164.3M752.5 150.71V166.88M753.5 148.51V169.85M754.5 145.19V193M755.5 152.78V171.8M756.5 151.37V176.11M757.5 150.48V170.07M758.5 149.47V172.59M759.5 153.5V175.5M760.5 149.49V159.29M761.5 144.4V193M762.5 149.64V193M763.5 147.72V170.03M764.5 147.9V189.46M765.5 147.61V172.96M766.5 146.93V168.74M767.5 142.6V171.78M768.5 153.67V172.19M769.5 151.21V175.76M770.5 151.2V193M771.5 150.6V166.27M772.5 149.13V193M773.5 148.88V190.57M774.5 148.63V193M775.5 149.23V156.92M776.5 151.19V170.06M777.5 151.58V172.56M778.5 149.95V168.12M779.5 149.73V169.5M780.5 150.28V193M781.5 150.34V172.65M782.5 149.15V193M783.5 147.14V170.32M784.5 150.9V172.45M785.5 149.03V193M786.5 149.83V170.86M787.5 146.73V175.22M788.5 145.96V175.5M789.5 141.72V172.44M790.5 145.02V193M791.5 143.96V176.44M792.5 145.86V193M793.5 148.99V193M794.5 149.98V168.11M795.5 148.79V174.58M796.5 148.6V177.72M797.5 150.08V193M798.5 154.32V179.01M799.5 131V193M800.5 154.48V171.32M801.5 150.39V193M802.5 148.49V174.84M803.5 150.99V172.88M804.5 150.7V190.08M805.5 153.99V176.06M806.5 151.49V171.31M807.5 147.94V193M808.5 152.73V169.03M809.5 152.5V193M810.5 155.36V174M811.5 152.7V179.17M812.5 150.43V193M813.5 149.37V175.19M814.5 144.08V174.35M815.5 149.49V174.05M816.5 146.57V177.76M817.5 148.69V175.82M818.5 148.97V169.79M819.5 150.3V193M820.5 149.94V169.07M821.5 147.01V169.91M822.5 151.82V167.16M823.5 147.2V168.4M824.5 144.62V172.51M825.5 149.42V184.31M826.5 143.78V157.76M827.5 144.83V165.56M828.5 149.12V168.72M829.5 149.88V172.82M830.5 152.12V178.76M831.5 145.07V193M832.5 149.12V168.11M833.5 142.72V188.48M834.5 146.14V171.49M835.5 148.84V181.68M836.5 149.27V169.86M837.5 149.67V169.18M838.5 150.14V168M839.5 153.68V193M840.5 149.25V162.88M841.5 150.46V193M842.5 150.4V166M843.5 149.26V164.43M844.5 152.97V163.24M845.5 148.81V168.87M846.5 147.42V187.45M847.5 149.89V193M848.5 148.61V175.86M849.5 147.88V186.53M850.5 149.5V174.3M851.5 146.34V173.52M852.5 146.66V174.01M853.5 145.62V175.89M854.5 149V174.61M855.5 146.92V193M856.5 148.58V168.68M857.5 141.47V193M858.5 148.82V167.51M859.5 149.02V154.27M860.5 148.76V155.68M861.5 149.51V193M862.5 145.25V167.81M863.5 145.88V170.47M864.5 144.7V183.68M865.5 147.27V171.21M866.5 146.23V177.34M867.5 142.44V165.93M868.5 149.86V164.19M869.5 147.47V161.38M870.5 149.82V164.09M871.5 148.14V186.38M872.5 147.24V171.22M873.5 151.02V173.82M874.5 151.28V193M875.5 149.1V173.72M876.5 151.56V175.91M877.5 153.44V193M878.5 151.84V176.96M879.5 148.68V173.76M880.5 150.24V174.34M881.5 151.33V193M882.5 144.73V193M883.5 151.11V173.96M884.5 150.75V174.96M885.5 153.79V173.98M886.5 153.68V177.13M887.5 150.28V187.9M888.5 151.63V169.54M889.5 150.39V177.52M890.5 149.99V158.7M891.5 145.89V167.15M892.5 147.96V162.45M893.5 148.73V193M894.5 148.08V154.07M895.5 141.81V154.42M896.5 146.56V170.23M897.5 152.02V193M898.5 151.11V174.6M899.5 148.13V190.12M900.5 150.36V193M901.5 149.09V193M902.5 148.83V174.22M903.5 142.71V170.84M904.5 152.49V173.44M905.5 146.85V191.81M906.5 150.66V193M907.5 155.32V160.32M908.5 150.36V193M909.5 149.07V193M910.5 149.16V193M911.5 148.94V187.9M912.5 150.83V193M913.5 149.3V169.29M914.5 149.94V167.95M915.5 149.56V171.96M916.5 150.16V169M917.5 147.07V173.6M918.5 146.48V170.93M919.5 147.23V171.65M920.5 146.87V167.65M921.5 147.26V171.62M922.5 145.39V170.12M923.5 148.57V166.09M924.5 148.6V193M925.5 151.45V161.5M926.5 150.26V193M927.5 148.93V171M928.5 148.16V176.3M929.5 147.5V174.23M930.5 150.11V172.41M931.5 151.9V167.48M932.5 150.67V165.96M933.5 144.41V171.76M934.5 150.99V175.42M935.5 145.71V176.03M936.5 148.11V171.92M937.5 150.78V171.64M938.5 151.85V193M939.5 150.55V171.64M940.5 148.22V172.6M941.5 148.52V168.68M942.5 148.02V164.46M943.5 151.83V163.57M944.5 147.66V163.98M945.5 153.21V166.85M946.5 149.99V163.19M947.5 150.33V193M948.5 152.45V193M949.5 151.4V158.74M950.5 147.07V171.16M951.5 143.9V167.18M952.5 140.49V185.74M953.5 147.52V193M954.5 147.92V170.88M955.5 148.93V175.94M956.5 147.25V177.51M957.5 147.63V169.18M958.5 149.67V164.24M959.5 145.71V165.92M960.5 150.2V165.89M961.5 140.64V169.39M962.5 148.39V169.38M963.5 148.54V167.22M964.5 148.2V168.21M965.5 143.26V170.58M966.5 144.88V169.12M967.5 149.93V167.71M968.5 144.06V193M969.5 146.82V168.07M970.5 148.57V166.69M971.5 147.59V193M972.5 147.73V168.13M973.5 140.22V193M974.5 147.26V164.23M975.5 146.76V168.19M976.5 142.85V193M977.5 145.53V152.81M978.5 151.06V156.06M979.5 143.04V152.55M980.5 151.58V156.58M981.5 147.12V169.18M982.5 148.52V171.54M983.5 148.74V193M984.5 142.8V172.25M985.5 149.38V172.79M986.5 142.71V190.66M987.5 146.53V164.74M988.5 145.18V193M989.5 143.75V172.08M990.5 147.49V175.78M991.5 147.03V193M992.5 145.79V170.33M993.5 150.4V176M994.5 144.62V170.14M995.5 147.16V167.06M996.5 144.9V166.66M997.5 147.58V163.27M998.5 146.42V193M999.5 142.52V156.93M1000.5 140.1V155.46M1001.5 148.4V183.12M1002.5 150.39V173.89M1003.5 149.9V171.18M1004.5 152.16V171.2M1005.5 152.78V179.25M1006.5 153.64V172.07M1007.5 154.12V178.27M1008.5 153.44V193M1009.5 155.4V175.89" stroke="#00ff00" stroke-width="1" fill="none" shape-rendering="crispEdges"/>
<path d="M43 20.5H1010M43 44.5H1010M43 69.5H1010M43 93.5H1010M43 118.5H1010M43 142.5H1010M43 167.5H1010M43 191.5H1010M43.5 17V24M62.5 17V24M81.5 17V24M101.5 17V24M120.5 17V24M139.5 17V24M159.5 17V24M178.5 17V24M197.5 17V24M217.5 17V24M236.5 17V24M255.5 17V24M275.5 17V24M294.5 17V24M313.5 17V24M333.5 17V24M352.5 17V24M371.5 17V24M391.5 17V24M410.5 17V24M429.5 17V24M449.5 17V24M468.5 17V24M487.5 17V24M507.5 17V24M545.5 17V24M565.5 17V24M584.5 17V24M603.5 17V24M623.5 17V24M642.5 17V24M661.5 17V24M681.5 17V24M700.5 17V24M719.5 17V24M739.5 17V24M758.5 17V24M777.5 17V24M797.5 17V24M816.5 17V24M835.5 17V24M855.5 17V24M874.5 17V24M893.5 17V24M913.5 17V24M932.5 17V24M951.5 17V24M971.5 17V24M990.5 17V24M1010.5 17V24M43.5 41V48M62.5 41V48M81.5 41V48M101.5 41V48M120.5 41V48M139.5 41V48M159.5 41V48M178.5 41V48M197.5 41V48M217.5 41V48M236.5 41V48M255.5 41V48M275.5 41V48M294.5 41V48M313.5 41V48M333.5 41V48M352.5 41V48M371.5 41V48M391.5 41V48M410.5 41V48M429.5 41V48M449.5 41V48M468.5 41V48M487.5 41V48M507.5 41V48M545.5 41V48M565.5 41V48M584.5 41V48M603.5 41V48M623.5 41V48M642.5 41V48M661.5 41V48M681.5 41V48M700.5 41V48M719.5 41V48M739.5 41V48M758.5 41V48M777.5 41V48M797.5 41V48M816.5 41V48M835.5 41V48M855.5 41V48M874.5 41V48M893.5 41V48M913.5 41V48M932.5 41V48M951.5 41V48M971.5 41V48M990.5 41V48M1010.5 41V48M43.5 66V73M62.5 66V73M81.5 66V73M101.5 66V73M120.5 66V73M139.5 66V73M159.5 66V73M178.5 66V73M197.5 66V73M217.5 66V73M236.5 66V73M255.5 66V73M275.5 66V73M294.5 66V73M313.5 66V73M333.5 66V73M352.5 66V73M371.5 66V73M391.5 66V73M410.5 66V73M429.5 66V73M449.5 66V73M468.5 66V73M487.5 66V73M507.5 66V73M545.5 66V73M565.5 66V73M584.5 66V73M603.5 66V73M623.5 66V73M642.5 66V73M661.5 66V73M681.5 66V73M700.5 66V73M719.5 66V73M739.5 66V73M758.5 66V73M777.5 66V73M797.5 66V73M816.5 66V73M835.5 66V73M855.5 66V73M874.5 66V73M893.5 66V73M913.5 66V73M932.5 66V73M951.5 66V73M971.5 66V73M990.5 66V73M1010.5 66V73M43.5 90V97M62.5 90V97M81.5 90V97M101.5 90V97M120.5 90V97M139.5 90V97M159.5 90V97M178.5 90V97M197.5 90V97M217.5 90V97M236.5 90V97M255.5 90V97M275.5 90V97M294.5 90V97M313.5 90V97M333.5 90V97M352.5 90V97M371.5 90V97M391.5 90V97M410.5 90V97M429.5 90V97M449.5 90V97M468.5 90V97M487.5 90V97M507.5 90V97M545.5 90V97M565.5 90V97M584.5 90V97M603.5 90V97M623.5 90V97M642.5 90V97M661.5 90V97M681.5 90V97M700.5 90V97M719.5 90V97M739.5 90V97M758.5 90V97M777.5 90V97M797.5 90V97M816.5 90V97M835.5 90V97M855.5 90V97M874.5 90V97M893.5 90V97M913.5 90V97M932.5 90V97M951.5 90V97M971.5 90V97M990.5 90V97M1010.5 90V97M43.5 115V122M62.5 115V122M81.5 115V122M101.5 115V122M120.5 115V122M139.5 115V122M159.5 115V122M178.5 115V122M197.5 115V122M217.5 115V122M236.5 115V122M255.5 115V122M275.5 115V122M294.5 115V122M313.5 115V122M333.5 115V122M352.5 115V122M371.5 115V122M391.5 115V122M410.5 115V122M429.5 115V122M449.5 115V122M468.5 115V122M487.5 115V122M507.5 115V122M545.5 115V122M565.5 115V122M584.5 115V122M603.5 115V122M623.5 115V122M642.5 115V122M661.5 115V122M681.5 115V122M700.5 115V122M719.5 115V122M739.5 115V122M758.5 115V122M777.5 115V122M797.5 115V122M816.5 115V122M835.5 115V122M855.5 115V122M874.5 115V122M893.5 115V122M913.5 115V122M932.5 115V122M951.5 115V122M971.5 115V122M990.5 115V122M1010.5 115V122M43.5 139V146M62.5 139V146M81.5 139V146M101.5 139V146M120.5 139V146M139.5 139V146M159.5 139V146M178.5 139V146M197.5 139V146M217.5 139V146M236.5 139V146M255.5 139V146M275.5 139V146M294.5 139V146M313.5 139V146M333.5 139V146M352.5 139V146M371.5 139V146M391.5 139V146M410.5 139V146M429.5 139V146M449.5 139V146M468.5 139V146M487.5 139V146M507.5 139V146M545.5 139V146M565.5 139V146M584.5 139V146M603.5 139V146M623.5 139V146M642.5 139V146M661.5 139V146M681.5 139V146M700.5 139V146M719.5 139V146M739.5 139V146M758.5 139V146M777.5 139V146M797.5 139V146M816.5 139V146M835.5 139V146M855.5 139V146M874.5 139V146M893.5 139V146M913.5 139V146M932.5 139V146M951.5 139V146M971.5 139V146M990.5 139V146M1010.5 139V146M43.5 164V171M62.5 164V171M81.5 164V171M101.5 164V171M120.5 164V171M139.5 164V171M159.5 164V171M178.5 164V171M197.5 164V171M217.5 164V171M236.5 164V171M255.5 164V171M275.5 164V171M294.5 164V171M313.5 164V171M333.5 164V171M352.5 164V171M371.5 164V171M391.5 164V171M410.5 164V171M429.5 164V171M449.5 164V171M468.5 164V171M487.5 164V171M507.5 164V171M545.5 164V171M565.5 164V171M584.5 164V171M603.5 164V171M623.5 164V171M642.5 164V171M661.5 164V171M681.5 164V171M700.5 164V171M719.5 164V171M739.5 164V171M758.5 164V171M777.5 164V171M797.5 164V171M816.5 164V171M835.5 164V171M855.5 164V171M874.5 164V171M893.5 164V171M913.5 164V171M932.5 164V171M951.5 164V171M971.5 164V171M990.5 164V171M1010.5 164V171M43.5 188V195M62.5 188V195M81.5 188V195M101.5 188V195M120.5 188V195M139.5 188V195M159.5 188V195M178.5 188V195M197.5 188V195M217.5 188V195M236.5 188V195M255.5 188V195M275.5 188V195M294.5 188V195M313.5 188V195M333.5 188V195M352.5 188V195M371.5 188V195M391.5 188V195M410.5 188V195M429.5 188V195M449.5 188V195M468.5 188V195M487.5 188V195M507.5 188V195M545.5 188V195M565.5 188V195M584.5 188V195M603.5 188V195M623.5 188V195M642.5 188V195M661.5 188V195M681.5 188V195M700.5 188V195M719.5 188V195M739.5 188V195M758.5 188V195M777.5 188V195M797.5 188V195M816.5 188V195M835.5 188V195M855.5 188V195M874.5 188V195M893.5 188V195M913.5 188V195M932.5 188V195M951.5 188V195M971.5 188V195M990.5 188V195M1010.5 188V195M41 32.5H46M137 32.5H142M234 32.5H239M331 32.5H336M427 32.5H432M524 32.5H529M621 32.5H626M717 32.5H722M814 32.5H819M911 32.5H916M1008 32.5H1013M41 56.5H46M137 56.5H142M234 56.5H239M331 56.5H336M427 56.5H432M524 56.5H529M621 56.5H626M717 56.5H722M814 56.5H819M911 56.5H916M1008 56.5H1013M41 81.5H46M137 81.5H142M234 81.5H239M331 81.5H336M427 81.5H432M524 81.5H529M621 81.5H626M717 81.5H722M814 81.5H819M911 81.5H916M1008 81.5H1013M41 105.5H46M137 105.5H142M234 105.5H239M331 105.5H336M427 105.5H432M524 105.5H529M621 105.5H626M717 105.5H722M814 105.5H819M911 105.5H916M1008 105.5H1013M41 130.5H46M137 130.5H142M234 130.5H239M331 130.5H336M427 130.5H432M524 130.5H529M621 130.5H626M717 130.5H722M814 130.5H819M911 130.5H916M1008 130.5H1013M41 154.5H46M137 154.5H142M234 154.5H239M331 154.5H336M427 154.5H432M524 154.5H529M621 154.5H626M717 154.5H722M814 154.5H819M911 154.5H916M1008 154.5H1013M41 179.5H46M137 179.5H142M234 179.5H239M331 179.5H336M427 179.5H432M524 179.5H529M621 179.5H626M717 179.5H722M814 179.5H819M911 179.5H916M1008 179.5H1013" stroke="#5c5c5c" stroke-width="1" fill="none" style="mix-blend-mode:screen" shape-rendering="crispEdges"/>
<path d="M526.5 17V24M526.5 41V48M526.5 66V73M526.5 90V97M526.5 115V122M526.5 139V146M526.5 164V171M526.5 188V195" stroke="#ff1010" stroke-width="1.6" fill="none" style="mix-blend-mode:screen"/>
</g>
<rect x="525.7" y="16" width="1.6" height="4.5" fill="#ff1010"/>
<rect x="460" y="69" width="3" height="3.5" fill="#050505"/>
<rect x="461" y="70" width="1" height="4.5" fill="#00ff00"/>
<path d="M461.5 66.9L465.1 70.5L461.5 74.1L457.9 70.5Z" fill="none" stroke="#f8e800" stroke-width="2" stroke-linejoin="miter"/>
<rect x="537" y="35" width="3" height="3.5" fill="#050505"/>
<rect x="538" y="36" width="1" height="4.5" fill="#00ff00"/>
<path d="M538.5 32.9L542.1 36.5L538.5 40.1L534.9 36.5Z" fill="none" stroke="#ff0808" stroke-width="2" stroke-linejoin="miter"/>
<rect x="614" y="66" width="3" height="3.5" fill="#050505"/>
<rect x="615" y="67" width="1" height="4.5" fill="#00ff00"/>
<path d="M615.5 63.9L619.1 67.5L615.5 71.1L611.9 67.5Z" fill="none" stroke="#f8a858" stroke-width="2" stroke-linejoin="miter"/>
<rect x="692" y="114" width="3" height="3.5" fill="#050505"/>
<rect x="693" y="115" width="1" height="4.5" fill="#00ff00"/>
<path d="M693.5 111.9L697.1 115.5L693.5 119.1L689.9 115.5Z" fill="none" stroke="#ffffff" stroke-width="2" stroke-linejoin="miter"/>
<rect x="47" y="24" width="143" height="52.5" fill="#050505"/>
<text x="54.3" y="35.8" font-size="11" fill="#ff1010" text-anchor="start" textLength="74" lengthAdjust="spacingAndGlyphs">2250.0157 MHz</text>
<text x="135.5" y="35.8" font-size="11" fill="#ff1010" text-anchor="start" textLength="52.5" lengthAdjust="spacingAndGlyphs">-56.512 dB</text>
<text x="54.3" y="48.9" font-size="11" fill="#f0a860" text-anchor="start" textLength="74" lengthAdjust="spacingAndGlyphs">2250.1157 MHz</text>
<text x="135.5" y="48.9" font-size="11" fill="#f0a860" text-anchor="start" textLength="52.5" lengthAdjust="spacingAndGlyphs">-69.535 dB</text>
<text x="54.3" y="62" font-size="11" fill="#ffff20" text-anchor="start" textLength="74" lengthAdjust="spacingAndGlyphs">2249.9157 MHz</text>
<text x="135.5" y="62" font-size="11" fill="#ffff20" text-anchor="start" textLength="52.5" lengthAdjust="spacingAndGlyphs">-70.349 dB</text>
<text x="54.3" y="75.1" font-size="11" fill="#ffffff" text-anchor="start" textLength="74" lengthAdjust="spacingAndGlyphs">2250.2157 MHz</text>
<text x="135.5" y="75.1" font-size="11" fill="#ffffff" text-anchor="start" textLength="52.5" lengthAdjust="spacingAndGlyphs">-89.884 dB</text>
<defs>
<linearGradient id="cb" x1="0" y1="0" x2="0" y2="1">
<stop offset="0" stop-color="#ff0808"/>
<stop offset="0.03" stop-color="#ff1800"/>
<stop offset="0.11" stop-color="#ff9428"/>
<stop offset="0.19" stop-color="#fff848"/>
<stop offset="0.26" stop-color="#b4ff58"/>
<stop offset="0.33" stop-color="#58f488"/>
<stop offset="0.42" stop-color="#38ecc0"/>
<stop offset="0.49" stop-color="#30d4e8"/>
<stop offset="0.53" stop-color="#42a4f0"/>
<stop offset="0.59" stop-color="#5070e0"/>
<stop offset="0.63" stop-color="#5252c8"/>
<stop offset="0.71" stop-color="#2a2a7c"/>
<stop offset="0.78" stop-color="#121a44"/>
<stop offset="0.91" stop-color="#07080f"/>
<stop offset="1" stop-color="#000000"/>
</linearGradient>
<linearGradient id="wbg" x1="0" y1="0" x2="1" y2="0">
<stop offset="0" stop-color="#051240"/>
<stop offset="0.01" stop-color="#0b1f67"/>
<stop offset="0.45" stop-color="#0b1f68"/>
<stop offset="0.58" stop-color="#0f206e"/>
<stop offset="0.68" stop-color="#142173"/>
<stop offset="0.78" stop-color="#192277"/>
<stop offset="0.86" stop-color="#1e2379"/>
<stop offset="0.97" stop-color="#1e2379"/>
<stop offset="0.98" stop-color="#0c1c5e"/>
<stop offset="0.99" stop-color="#081850"/>
<stop offset="1" stop-color="#041446"/>
</linearGradient>
<filter id="nz" x="0" y="0" width="100%" height="100%" color-interpolation-filters="sRGB"><feTurbulence type="fractalNoise" baseFrequency="0.85" numOctaves="1" seed="7" result="t"/><feColorMatrix type="matrix" values="0 0 0 0 0.14  0 0 0 0 0.26  0 0 0 0 0.72  2.5 0 0 0 -1.25"/></filter>
<filter id="nd" x="0" y="0" width="100%" height="100%" color-interpolation-filters="sRGB"><feTurbulence type="fractalNoise" baseFrequency="0.8" numOctaves="1" seed="23" result="t"/><feColorMatrix type="matrix" values="0 0 0 0 0.02  0 0 0 0 0.06  0 0 0 0 0.30  0 2.5 0 0 -1.25"/></filter>
<filter id="bx" x="-20%" y="0" width="140%" height="100%"><feGaussianBlur stdDeviation="0.9 0"/></filter>
<clipPath id="cw"><rect x="43" y="192" width="967" height="345.5"/></clipPath>
<clipPath id="cl"><rect x="43" y="336.5" width="967" height="201"/></clipPath>
<clipPath id="ct"><rect x="43" y="192" width="967" height="144.5"/></clipPath>
</defs>
<rect x="32" y="192" width="11" height="345.5" fill="url(#cb)"/>
<text x="5.3" y="205.9" font-size="15.4" fill="#000" text-anchor="start" textLength="19.7" lengthAdjust="spacingAndGlyphs">-50</text>
<text x="5.3" y="252.1" font-size="15.4" fill="#000" text-anchor="start" textLength="19.7" lengthAdjust="spacingAndGlyphs">-60</text>
<text x="5.3" y="298.3" font-size="15.4" fill="#000" text-anchor="start" textLength="19.7" lengthAdjust="spacingAndGlyphs">-70</text>
<text x="5.3" y="344.5" font-size="15.4" fill="#000" text-anchor="start" textLength="19.7" lengthAdjust="spacingAndGlyphs">-80</text>
<text x="5.3" y="390.7" font-size="15.4" fill="#000" text-anchor="start" textLength="19.7" lengthAdjust="spacingAndGlyphs">-90</text>
<text x="5.3" y="436.9" font-size="15.4" fill="#000" text-anchor="start" textLength="28.5" lengthAdjust="spacingAndGlyphs">-100</text>
<text x="5.3" y="483.1" font-size="15.4" fill="#000" text-anchor="start" textLength="28.5" lengthAdjust="spacingAndGlyphs">-110</text>
<text x="5.3" y="529.3" font-size="15.4" fill="#000" text-anchor="start" textLength="28.5" lengthAdjust="spacingAndGlyphs">-120</text>
<rect x="43" y="192" width="967" height="345.5" fill="url(#wbg)"/>
<g shape-rendering="crispEdges">
<path d="M261.58 192L820.58 192L833.54 537.5L274.54 537.5Z" fill="#2020a0" opacity="0.05" clip-path="url(#cl)" filter="url(#bx)"/>
<path d="M354.58 192L694.58 192L707.54 537.5L367.54 537.5Z" fill="#2828a8" opacity="0.12" clip-path="url(#cl)" filter="url(#bx)"/>
<path d="M413.72 409L802.72 409L807.54 537.5L418.54 537.5Z" fill="#3048c8" opacity="0.1" clip-path="url(#cl)" filter="url(#bx)"/>
<line x1="94.4" y1="192" x2="94.4" y2="537.5" stroke="#3838b8" stroke-width="3" opacity="0.3" clip-path="url(#cw)"/>
<line x1="94.4" y1="192" x2="94.4" y2="537.5" stroke="#4444c4" stroke-width="1" opacity="0.5" clip-path="url(#cw)"/>
<line x1="143" y1="192" x2="143" y2="537.5" stroke="#3838b8" stroke-width="3" opacity="0.3" clip-path="url(#cw)"/>
<line x1="143" y1="192" x2="143" y2="537.5" stroke="#4444c4" stroke-width="1" opacity="0.5" clip-path="url(#cw)"/>
<line x1="190.9" y1="192" x2="190.9" y2="537.5" stroke="#3838b8" stroke-width="3" opacity="0.3" clip-path="url(#cw)"/>
<line x1="190.9" y1="192" x2="190.9" y2="537.5" stroke="#4444c4" stroke-width="1" opacity="0.5" clip-path="url(#cw)"/>
<line x1="239.5" y1="192" x2="239.5" y2="537.5" stroke="#3838b8" stroke-width="3" opacity="0.3" clip-path="url(#cw)"/>
<line x1="239.5" y1="192" x2="239.5" y2="537.5" stroke="#4444c4" stroke-width="1" opacity="0.5" clip-path="url(#cw)"/>
<line x1="287.6" y1="192" x2="287.6" y2="537.5" stroke="#3838b8" stroke-width="3" opacity="0.3" clip-path="url(#cw)"/>
<line x1="287.6" y1="192" x2="287.6" y2="537.5" stroke="#4444c4" stroke-width="1" opacity="0.5" clip-path="url(#cw)"/>
<line x1="335.6" y1="192" x2="335.6" y2="537.5" stroke="#3838b8" stroke-width="3" opacity="0.3" clip-path="url(#cw)"/>
<line x1="335.6" y1="192" x2="335.6" y2="537.5" stroke="#4444c4" stroke-width="1" opacity="0.5" clip-path="url(#cw)"/>
<line x1="769" y1="192" x2="769" y2="537.5" stroke="#3838b8" stroke-width="3" opacity="0.3" clip-path="url(#cw)"/>
<line x1="769" y1="192" x2="769" y2="537.5" stroke="#4444c4" stroke-width="1" opacity="0.5" clip-path="url(#cw)"/>
<line x1="817.7" y1="192" x2="817.7" y2="537.5" stroke="#3838b8" stroke-width="3" opacity="0.3" clip-path="url(#cw)"/>
<line x1="817.7" y1="192" x2="817.7" y2="537.5" stroke="#4444c4" stroke-width="1" opacity="0.5" clip-path="url(#cw)"/>
<line x1="866" y1="192" x2="866" y2="537.5" stroke="#3838b8" stroke-width="3" opacity="0.3" clip-path="url(#cw)"/>
<line x1="866" y1="192" x2="866" y2="537.5" stroke="#4444c4" stroke-width="1" opacity="0.5" clip-path="url(#cw)"/>
<line x1="914" y1="192" x2="914" y2="537.5" stroke="#3838b8" stroke-width="3" opacity="0.3" clip-path="url(#cw)"/>
<line x1="914" y1="192" x2="914" y2="537.5" stroke="#4444c4" stroke-width="1" opacity="0.5" clip-path="url(#cw)"/>
<line x1="964.7" y1="192" x2="964.7" y2="537.5" stroke="#3838b8" stroke-width="3" opacity="0.3" clip-path="url(#cw)"/>
<line x1="964.7" y1="192" x2="964.7" y2="537.5" stroke="#4444c4" stroke-width="1" opacity="0.5" clip-path="url(#cw)"/>
<line x1="842.8" y1="192" x2="842.8" y2="537.5" stroke="#3838b8" stroke-width="3" opacity="0.3" clip-path="url(#cw)"/>
<line x1="842.8" y1="192" x2="842.8" y2="537.5" stroke="#4444c4" stroke-width="1" opacity="0.5" clip-path="url(#cw)"/>
<line x1="892" y1="192" x2="892" y2="537.5" stroke="#3838b8" stroke-width="3" opacity="0.3" clip-path="url(#cw)"/>
<line x1="892" y1="192" x2="892" y2="537.5" stroke="#4444c4" stroke-width="1" opacity="0.5" clip-path="url(#cw)"/>
<line x1="938.6" y1="192" x2="938.6" y2="537.5" stroke="#3838b8" stroke-width="3" opacity="0.3" clip-path="url(#cw)"/>
<line x1="938.6" y1="192" x2="938.6" y2="537.5" stroke="#4444c4" stroke-width="1" opacity="0.5" clip-path="url(#cw)"/>
<line x1="986" y1="192" x2="986" y2="537.5" stroke="#3838b8" stroke-width="3" opacity="0.3" clip-path="url(#cw)"/>
<line x1="986" y1="192" x2="986" y2="537.5" stroke="#4444c4" stroke-width="1" opacity="0.5" clip-path="url(#cw)"/>
<line x1="797.8" y1="192" x2="797.8" y2="537.5" stroke="#3838b8" stroke-width="3" opacity="0.3" clip-path="url(#cw)"/>
<line x1="797.8" y1="192" x2="797.8" y2="537.5" stroke="#4444c4" stroke-width="1" opacity="0.5" clip-path="url(#cw)"/>
<line x1="745" y1="192" x2="745" y2="537.5" stroke="#3838b8" stroke-width="3" opacity="0.3" clip-path="url(#cw)"/>
<line x1="745" y1="192" x2="745" y2="537.5" stroke="#4444c4" stroke-width="1" opacity="0.5" clip-path="url(#cw)"/>
<line x1="720.5" y1="192" x2="720.5" y2="537.5" stroke="#3838b8" stroke-width="3" opacity="0.3" clip-path="url(#cw)"/>
<line x1="720.5" y1="192" x2="720.5" y2="537.5" stroke="#4444c4" stroke-width="1" opacity="0.5" clip-path="url(#cw)"/>
<line x1="136.8" y1="192" x2="136.8" y2="537.5" stroke="#3c3cb8" stroke-width="1" opacity="0.3" clip-path="url(#cw)"/>
<line x1="231.5" y1="192" x2="231.5" y2="537.5" stroke="#3c3cb8" stroke-width="1" opacity="0.3" clip-path="url(#cw)"/>
<line x1="278.7" y1="192" x2="278.7" y2="537.5" stroke="#3c3cb8" stroke-width="1" opacity="0.3" clip-path="url(#cw)"/>
<line x1="70" y1="192" x2="70" y2="537.5" stroke="#3c3cb8" stroke-width="1" opacity="0.3" clip-path="url(#cw)"/>
<line x1="118" y1="192" x2="118" y2="537.5" stroke="#3c3cb8" stroke-width="1" opacity="0.3" clip-path="url(#cw)"/>
<line x1="166" y1="192" x2="166" y2="537.5" stroke="#3c3cb8" stroke-width="1" opacity="0.3" clip-path="url(#cw)"/>
<line x1="215" y1="192" x2="215" y2="537.5" stroke="#3c3cb8" stroke-width="1" opacity="0.3" clip-path="url(#cw)"/>
<line x1="263" y1="192" x2="263" y2="537.5" stroke="#3c3cb8" stroke-width="1" opacity="0.3" clip-path="url(#cw)"/>
<line x1="311" y1="192" x2="311" y2="537.5" stroke="#3c3cb8" stroke-width="1" opacity="0.3" clip-path="url(#cw)"/>
<path d="M468 192L476 192L488.96 537.5L480.96 537.5Z" fill="#2c2ca0" opacity="0.35" clip-path="url(#cw)" filter="url(#bx)"/>
<path d="M476 192L489 192L501.96 537.5L488.96 537.5Z" fill="#3a3ab8" opacity="0.75" clip-path="url(#cw)" filter="url(#bx)"/>
<path d="M489 192L511 192L523.96 537.5L501.96 537.5Z" fill="#2c34b0" opacity="0.3" clip-path="url(#cw)" filter="url(#bx)"/>
<path d="M517 192L532 192L544.96 537.5L529.96 537.5Z" fill="#1c2490" opacity="0.25" clip-path="url(#cw)" filter="url(#bx)"/>
<path d="M532 192L561 192L573.96 537.5L544.96 537.5Z" fill="#3438b4" opacity="0.5" clip-path="url(#cw)" filter="url(#bx)"/>
<path d="M567 192L589 192L601.96 537.5L579.96 537.5Z" fill="#2c34b0" opacity="0.3" clip-path="url(#cw)" filter="url(#bx)"/>
<path d="M589 192L603 192L615.96 537.5L601.96 537.5Z" fill="#3a3ab8" opacity="0.7" clip-path="url(#cw)" filter="url(#bx)"/>
<path d="M592 192L607 192L619.96 537.5L604.96 537.5Z" fill="#4444c0" opacity="0.5" clip-path="url(#cl)" filter="url(#bx)"/>
<path d="M603 192L614 192L626.96 537.5L615.96 537.5Z" fill="#3434b0" opacity="0.45" clip-path="url(#cw)" filter="url(#bx)"/>
<path d="M614 192L640 192L652.96 537.5L626.96 537.5Z" fill="#2c2ca0" opacity="0.25" clip-path="url(#cw)" filter="url(#bx)"/>
<path d="M355.28 192L368.58 192L381.54 537.5L368.24 537.5Z" fill="#4040b8" opacity="0.75" clip-path="url(#cl)" filter="url(#bx)"/>
<path d="M368.58 192L405.58 192L418.54 537.5L381.54 537.5Z" fill="#2a2a98" opacity="0.45" clip-path="url(#cl)" filter="url(#bx)"/>
<path d="M405.58 192L431.58 192L444.54 537.5L418.54 537.5Z" fill="#4848c4" opacity="0.9" clip-path="url(#cl)" filter="url(#bx)"/>
<path d="M413.72 409L439.72 409L444.54 537.5L418.54 537.5Z" fill="#4868d8" opacity="0.45" clip-path="url(#cl)" filter="url(#bx)"/>
<path d="M427.78 192L429.18 192L442.14 537.5L440.74 537.5Z" fill="#1c1c80" opacity="0.7" clip-path="url(#cl)" filter="url(#bx)"/>
<path d="M445.58 192L452.58 192L465.54 537.5L458.54 537.5Z" fill="#2c2c9c" opacity="0.8" clip-path="url(#cl)" filter="url(#bx)"/>
<path d="M452.58 192L478.58 192L491.54 537.5L465.54 537.5Z" fill="#4444c0" opacity="0.85" clip-path="url(#cl)" filter="url(#bx)"/>
<path d="M460.72 409L486.72 409L491.54 537.5L465.54 537.5Z" fill="#4860d0" opacity="0.35" clip-path="url(#cl)" filter="url(#bx)"/>
<path d="M602.18 192L630.08 192L643.04 537.5L615.14 537.5Z" fill="#4444c0" opacity="0.85" clip-path="url(#cl)" filter="url(#bx)"/>
<path d="M610.32 409L638.22 409L643.04 537.5L615.14 537.5Z" fill="#4860d0" opacity="0.35" clip-path="url(#cl)" filter="url(#bx)"/>
<path d="M643.58 192L671.58 192L684.54 537.5L656.54 537.5Z" fill="#4848c4" opacity="0.85" clip-path="url(#cl)" filter="url(#bx)"/>
<path d="M651.72 409L692.72 409L697.54 537.5L656.54 537.5Z" fill="#4868d8" opacity="0.35" clip-path="url(#cl)" filter="url(#bx)"/>
<path d="M671.58 192L708.58 192L721.54 537.5L684.54 537.5Z" fill="#2c2ca0" opacity="0.25" clip-path="url(#cl)" filter="url(#bx)"/>
<path d="M708.58 192L722.58 192L735.54 537.5L721.54 537.5Z" fill="#4646c2" opacity="0.85" clip-path="url(#cl)" filter="url(#bx)"/>
<path d="M722.58 192L794.58 192L807.54 537.5L735.54 537.5Z" fill="#2c2ca8" opacity="0.15" clip-path="url(#cl)" filter="url(#bx)"/>
<path d="M432.08 192L446.58 192L459.54 537.5L445.04 537.5Z" fill="#4088e0" opacity="1" clip-path="url(#cl)" filter="url(#bx)"/>
<path d="M440.22 409L454.72 409L459.54 537.5L445.04 537.5Z" fill="#40c0e8" opacity="0.8" clip-path="url(#cl)" filter="url(#bx)"/>
<path d="M434.58 192L444.08 192L457.04 537.5L447.54 537.5Z" fill="#44b0e8" opacity="0.6" clip-path="url(#cl)" filter="url(#bx)"/>
<path d="M432.08 192L433.68 192L446.64 537.5L445.04 537.5Z" fill="#50e0d8" opacity="1" clip-path="url(#cl)" filter="url(#bx)"/>
<path d="M444.98 192L446.58 192L459.54 537.5L457.94 537.5Z" fill="#48d0e0" opacity="1" clip-path="url(#cl)" filter="url(#bx)"/>
<path d="M630.28 192L644.58 192L657.54 537.5L643.24 537.5Z" fill="#4088e0" opacity="1" clip-path="url(#cl)" filter="url(#bx)"/>
<path d="M638.42 409L652.72 409L657.54 537.5L643.24 537.5Z" fill="#40c0e8" opacity="0.8" clip-path="url(#cl)" filter="url(#bx)"/>
<path d="M632.78 192L642.08 192L655.04 537.5L645.74 537.5Z" fill="#44b0e8" opacity="0.6" clip-path="url(#cl)" filter="url(#bx)"/>
<path d="M630.28 192L631.88 192L644.84 537.5L643.24 537.5Z" fill="#50e0d8" opacity="1" clip-path="url(#cl)" filter="url(#bx)"/>
<path d="M642.98 192L644.58 192L657.54 537.5L655.94 537.5Z" fill="#48d0e0" opacity="1" clip-path="url(#cl)" filter="url(#bx)"/>
<path d="M436.3 192L440.3 192L453.26 537.5L449.26 537.5Z" fill="#4848c8" opacity="0.8" clip-path="url(#ct)" filter="url(#bx)"/>
<path d="M437.5 192L439.2 192L452.16 537.5L450.46 537.5Z" fill="#5070d8" opacity="0.8" clip-path="url(#ct)" filter="url(#bx)"/>
<path d="M639.6 192L643.6 192L656.56 537.5L652.56 537.5Z" fill="#4848c8" opacity="0.7" clip-path="url(#ct)" filter="url(#bx)"/>
<path d="M640.8 192L642.4 192L655.36 537.5L653.76 537.5Z" fill="#5070d8" opacity="0.7" clip-path="url(#ct)" filter="url(#bx)"/>
<path d="M479.5 192L488 192L500.96 537.5L492.46 537.5Z" fill="#3c3cc0" opacity="0.4" clip-path="url(#ct)" filter="url(#bx)"/>
<path d="M511 192L517.2 192L530.16 537.5L523.96 537.5Z" fill="#38a8e4" opacity="1" clip-path="url(#cw)" filter="url(#bx)"/>
<path d="M512.2 192L516 192L528.96 537.5L525.16 537.5Z" fill="#44d0e4" opacity="1" clip-path="url(#cw)" filter="url(#bx)"/>
<path d="M513.2 192L515 192L527.96 537.5L526.16 537.5Z" fill="#68ecd0" opacity="0.9" clip-path="url(#cw)" filter="url(#bx)"/>
<path d="M561 192L567.2 192L580.16 537.5L573.96 537.5Z" fill="#38a8e4" opacity="1" clip-path="url(#cw)" filter="url(#bx)"/>
<path d="M562.2 192L566 192L578.96 537.5L575.16 537.5Z" fill="#44d0e4" opacity="1" clip-path="url(#cw)" filter="url(#bx)"/>
<path d="M563.2 192L565 192L577.96 537.5L576.16 537.5Z" fill="#68ecd0" opacity="0.9" clip-path="url(#cw)" filter="url(#bx)"/>
<line x1="383.4" y1="192" x2="396.36" y2="537.5" stroke="#4498e4" stroke-width="1" opacity="0.95" clip-path="url(#cw)"/>
<line x1="411" y1="192" x2="423.96" y2="537.5" stroke="#5c5cd8" stroke-width="1" opacity="0.7" clip-path="url(#cw)"/>
<line x1="426" y1="192" x2="438.96" y2="537.5" stroke="#5c5cd8" stroke-width="1" opacity="0.8" clip-path="url(#cw)"/>
<line x1="430" y1="192" x2="442.96" y2="537.5" stroke="#5c5cd8" stroke-width="1" opacity="0.8" clip-path="url(#cw)"/>
<line x1="461.5" y1="192" x2="474.46" y2="537.5" stroke="#b0f058" stroke-width="1" opacity="1" clip-path="url(#cw)"/>
<line x1="489" y1="192" x2="501.96" y2="537.5" stroke="#58ecc8" stroke-width="1" opacity="1" clip-path="url(#cw)"/>
<line x1="502.8" y1="192" x2="515.76" y2="537.5" stroke="#58ecc8" stroke-width="1" opacity="1" clip-path="url(#cw)"/>
<line x1="506.4" y1="192" x2="519.36" y2="537.5" stroke="#58ecc8" stroke-width="1" opacity="1" clip-path="url(#cw)"/>
<line x1="509" y1="192" x2="521.96" y2="537.5" stroke="#4498e4" stroke-width="1" opacity="0.7" clip-path="url(#cw)"/>
<line x1="521" y1="192" x2="533.96" y2="537.5" stroke="#5c5cd8" stroke-width="1" opacity="0.7" clip-path="url(#cw)"/>
<line x1="524.5" y1="192" x2="537.46" y2="537.5" stroke="#5c5cd8" stroke-width="1" opacity="0.7" clip-path="url(#cw)"/>
<line x1="528" y1="192" x2="540.96" y2="537.5" stroke="#5c5cd8" stroke-width="1" opacity="0.7" clip-path="url(#cw)"/>
<line x1="532.7" y1="192" x2="545.66" y2="537.5" stroke="#4498e4" stroke-width="1" opacity="0.9" clip-path="url(#cw)"/>
<line x1="535.7" y1="192" x2="548.66" y2="537.5" stroke="#4498e4" stroke-width="1" opacity="0.7" clip-path="url(#cw)"/>
<line x1="538.7" y1="192" x2="551.66" y2="537.5" stroke="#ffa028" stroke-width="1" opacity="1" clip-path="url(#cw)"/>
<line x1="541" y1="192" x2="553.96" y2="537.5" stroke="#40d0e4" stroke-width="1" opacity="0.8" clip-path="url(#cw)"/>
<line x1="544.5" y1="192" x2="557.46" y2="537.5" stroke="#5c5cd8" stroke-width="1" opacity="0.7" clip-path="url(#cw)"/>
<line x1="548" y1="192" x2="560.96" y2="537.5" stroke="#4498e4" stroke-width="1" opacity="0.8" clip-path="url(#cw)"/>
<line x1="551.5" y1="192" x2="564.46" y2="537.5" stroke="#5c5cd8" stroke-width="1" opacity="0.6" clip-path="url(#cw)"/>
<line x1="555" y1="192" x2="567.96" y2="537.5" stroke="#40d0e4" stroke-width="1" opacity="0.8" clip-path="url(#cw)"/>
<line x1="558" y1="192" x2="570.96" y2="537.5" stroke="#5c5cd8" stroke-width="1" opacity="0.6" clip-path="url(#cw)"/>
<line x1="568.5" y1="192" x2="581.46" y2="537.5" stroke="#4498e4" stroke-width="1" opacity="0.7" clip-path="url(#cw)"/>
<line x1="571" y1="192" x2="583.96" y2="537.5" stroke="#58ecc8" stroke-width="1" opacity="1" clip-path="url(#cw)"/>
<line x1="575.3" y1="192" x2="588.26" y2="537.5" stroke="#58ecc8" stroke-width="1" opacity="1" clip-path="url(#cw)"/>
<line x1="588.5" y1="192" x2="601.46" y2="537.5" stroke="#58ecc8" stroke-width="1" opacity="1" clip-path="url(#cw)"/>
<line x1="593" y1="192" x2="605.96" y2="537.5" stroke="#5c5cd8" stroke-width="1" opacity="0.5" clip-path="url(#cw)"/>
<line x1="597" y1="192" x2="609.96" y2="537.5" stroke="#5c5cd8" stroke-width="1" opacity="0.5" clip-path="url(#cw)"/>
<line x1="602" y1="192" x2="614.96" y2="537.5" stroke="#5c5cd8" stroke-width="1" opacity="0.45" clip-path="url(#cw)"/>
<line x1="607" y1="192" x2="619.96" y2="537.5" stroke="#5c5cd8" stroke-width="1" opacity="0.4" clip-path="url(#cw)"/>
<line x1="615.4" y1="192" x2="628.36" y2="537.5" stroke="#b0f058" stroke-width="1" opacity="1" clip-path="url(#cw)"/>
<line x1="649" y1="192" x2="661.96" y2="537.5" stroke="#4498e4" stroke-width="1" opacity="0.85" clip-path="url(#cw)"/>
<line x1="652.3" y1="192" x2="665.26" y2="537.5" stroke="#4498e4" stroke-width="1" opacity="0.8" clip-path="url(#cw)"/>
<line x1="666" y1="192" x2="678.96" y2="537.5" stroke="#4498e4" stroke-width="1" opacity="0.75" clip-path="url(#cw)"/>
<line x1="693" y1="192" x2="705.96" y2="537.5" stroke="#40d0e4" stroke-width="1" opacity="0.9" clip-path="url(#cw)"/>
<line x1="661" y1="192" x2="673.96" y2="537.5" stroke="#5c5cd8" stroke-width="1" opacity="0.4" clip-path="url(#cw)"/>
<line x1="676" y1="192" x2="688.96" y2="537.5" stroke="#5c5cd8" stroke-width="1" opacity="0.4" clip-path="url(#cw)"/>
<line x1="684" y1="192" x2="696.96" y2="537.5" stroke="#5c5cd8" stroke-width="1" opacity="0.35" clip-path="url(#cw)"/>
<line x1="484.5" y1="192" x2="497.46" y2="537.5" stroke="#5c5cd8" stroke-width="1" opacity="0.6" clip-path="url(#cw)"/>
<line x1="480" y1="192" x2="492.96" y2="537.5" stroke="#5c5cd8" stroke-width="1" opacity="0.5" clip-path="url(#cw)"/>
<line x1="493.8" y1="192" x2="506.76" y2="537.5" stroke="#50b4e8" stroke-width="1" opacity="0.9" clip-path="url(#cw)" stroke-dasharray="5 2"/>
<line x1="496.8" y1="192" x2="509.76" y2="537.5" stroke="#50b4e8" stroke-width="1" opacity="0.9" clip-path="url(#cw)" stroke-dasharray="4 3"/>
<line x1="499.8" y1="192" x2="512.76" y2="537.5" stroke="#50b4e8" stroke-width="1" opacity="0.9" clip-path="url(#cw)" stroke-dasharray="5 2"/>
<line x1="579.5" y1="192" x2="592.46" y2="537.5" stroke="#50b4e8" stroke-width="1" opacity="0.9" clip-path="url(#cw)" stroke-dasharray="4 3"/>
<line x1="582.5" y1="192" x2="595.46" y2="537.5" stroke="#50b4e8" stroke-width="1" opacity="0.9" clip-path="url(#cw)" stroke-dasharray="5 2"/>
<line x1="585.5" y1="192" x2="598.46" y2="537.5" stroke="#50b4e8" stroke-width="1" opacity="0.9" clip-path="url(#cw)" stroke-dasharray="4 3"/>
<line x1="541.48" y1="266" x2="544.14" y2="337" stroke="#f04818" stroke-width="1"/>
<line x1="546.31" y1="395" x2="549.12" y2="470" stroke="#f04818" stroke-width="1"/>
<line x1="262.38" y1="192" x2="275.34" y2="537.5" stroke="#4498e4" stroke-width="1" opacity="1" clip-path="url(#cl)"/>
<line x1="272.58" y1="192" x2="285.54" y2="537.5" stroke="#5c5cd8" stroke-width="1" opacity="0.55" clip-path="url(#cl)"/>
<line x1="281.58" y1="192" x2="294.54" y2="537.5" stroke="#5c5cd8" stroke-width="1" opacity="0.45" clip-path="url(#cl)"/>
<line x1="290.58" y1="192" x2="303.54" y2="537.5" stroke="#5c5cd8" stroke-width="1" opacity="0.55" clip-path="url(#cl)"/>
<line x1="296.58" y1="192" x2="309.54" y2="537.5" stroke="#5c5cd8" stroke-width="1" opacity="0.35" clip-path="url(#cl)"/>
<line x1="303.58" y1="192" x2="316.54" y2="537.5" stroke="#5c5cd8" stroke-width="1" opacity="0.6" clip-path="url(#cl)"/>
<line x1="308.58" y1="192" x2="321.54" y2="537.5" stroke="#5c5cd8" stroke-width="1" opacity="0.35" clip-path="url(#cl)"/>
<line x1="314.58" y1="192" x2="327.54" y2="537.5" stroke="#5c5cd8" stroke-width="1" opacity="0.6" clip-path="url(#cl)"/>
<line x1="320.58" y1="192" x2="333.54" y2="537.5" stroke="#5c5cd8" stroke-width="1" opacity="0.4" clip-path="url(#cl)"/>
<line x1="327.58" y1="192" x2="340.54" y2="537.5" stroke="#5088e8" stroke-width="1" opacity="0.9" clip-path="url(#cl)"/>
<line x1="340.08" y1="192" x2="353.04" y2="537.5" stroke="#50f0c0" stroke-width="1" opacity="1" clip-path="url(#cl)"/>
<line x1="352.38" y1="192" x2="365.34" y2="537.5" stroke="#7070e8" stroke-width="1" opacity="0.8" clip-path="url(#cl)"/>
<line x1="375.58" y1="192" x2="388.54" y2="537.5" stroke="#5c5cd8" stroke-width="1" opacity="0.7" clip-path="url(#cl)"/>
<line x1="387.58" y1="192" x2="400.54" y2="537.5" stroke="#5c5cd8" stroke-width="1" opacity="0.5" clip-path="url(#cl)"/>
<line x1="393.58" y1="192" x2="406.54" y2="537.5" stroke="#5c5cd8" stroke-width="1" opacity="0.5" clip-path="url(#cl)"/>
<line x1="398.58" y1="192" x2="411.54" y2="537.5" stroke="#5c5cd8" stroke-width="1" opacity="0.5" clip-path="url(#cl)"/>
<line x1="479.58" y1="192" x2="492.54" y2="537.5" stroke="#4498e4" stroke-width="1" opacity="0.7" clip-path="url(#cl)"/>
<line x1="683.58" y1="192" x2="696.54" y2="537.5" stroke="#5c5cd8" stroke-width="1" opacity="0.5" clip-path="url(#cl)"/>
<line x1="698.58" y1="192" x2="711.54" y2="537.5" stroke="#5c5cd8" stroke-width="1" opacity="0.5" clip-path="url(#cl)"/>
<line x1="703.58" y1="192" x2="716.54" y2="537.5" stroke="#5c5cd8" stroke-width="1" opacity="0.5" clip-path="url(#cl)"/>
<line x1="735.58" y1="192" x2="748.54" y2="537.5" stroke="#58f0b8" stroke-width="1" opacity="1" clip-path="url(#cl)"/>
<line x1="747.58" y1="192" x2="760.54" y2="537.5" stroke="#4aa8e8" stroke-width="1" opacity="0.95" clip-path="url(#cl)"/>
<line x1="760.18" y1="192" x2="773.14" y2="537.5" stroke="#5c5cd8" stroke-width="1" opacity="0.6" clip-path="url(#cl)"/>
<line x1="765.58" y1="192" x2="778.54" y2="537.5" stroke="#5c5cd8" stroke-width="1" opacity="0.4" clip-path="url(#cl)"/>
<line x1="771.58" y1="192" x2="784.54" y2="537.5" stroke="#5c5cd8" stroke-width="1" opacity="0.6" clip-path="url(#cl)"/>
<line x1="778.58" y1="192" x2="791.54" y2="537.5" stroke="#5c5cd8" stroke-width="1" opacity="0.4" clip-path="url(#cl)"/>
<line x1="786.08" y1="192" x2="799.04" y2="537.5" stroke="#5c5cd8" stroke-width="1" opacity="0.6" clip-path="url(#cl)"/>
<line x1="791.58" y1="192" x2="804.54" y2="537.5" stroke="#5c5cd8" stroke-width="1" opacity="0.55" clip-path="url(#cl)"/>
<line x1="800.58" y1="192" x2="813.54" y2="537.5" stroke="#5c5cd8" stroke-width="1" opacity="0.35" clip-path="url(#cl)"/>
<line x1="812.58" y1="192" x2="825.54" y2="537.5" stroke="#4498e4" stroke-width="1" opacity="1" clip-path="url(#cl)"/>
<line x1="525.58" y1="192" x2="538.54" y2="537.5" stroke="#40d0e4" stroke-width="1" opacity="0.95" clip-path="url(#cl)"/>
<line x1="550.38" y1="192" x2="563.34" y2="537.5" stroke="#40d0e4" stroke-width="1" opacity="0.95" clip-path="url(#cl)"/>
<line x1="587.58" y1="192" x2="600.54" y2="537.5" stroke="#40d0e4" stroke-width="1" opacity="0.9" clip-path="url(#cl)"/>
<line x1="594.58" y1="192" x2="607.54" y2="537.5" stroke="#4498e4" stroke-width="1" opacity="0.5" clip-path="url(#cl)"/>
<line x1="606.58" y1="192" x2="619.54" y2="537.5" stroke="#5c5cd8" stroke-width="1" opacity="0.5" clip-path="url(#cl)"/>
<line x1="620.58" y1="192" x2="633.54" y2="537.5" stroke="#5c5cd8" stroke-width="1" opacity="0.5" clip-path="url(#cl)"/>
<line x1="649.58" y1="192" x2="662.54" y2="537.5" stroke="#5c5cd8" stroke-width="1" opacity="0.5" clip-path="url(#cl)"/>
<line x1="656.58" y1="192" x2="669.54" y2="537.5" stroke="#5c5cd8" stroke-width="1" opacity="0.5" clip-path="url(#cl)"/>
<line x1="664.58" y1="192" x2="677.54" y2="537.5" stroke="#5c5cd8" stroke-width="1" opacity="0.5" clip-path="url(#cl)"/>
<line x1="414.58" y1="192" x2="427.54" y2="537.5" stroke="#5c5cd8" stroke-width="1" opacity="0.5" clip-path="url(#cl)"/>
<line x1="422.58" y1="192" x2="435.54" y2="537.5" stroke="#5c5cd8" stroke-width="1" opacity="0.5" clip-path="url(#cl)"/>
<line x1="466.58" y1="192" x2="479.54" y2="537.5" stroke="#5c5cd8" stroke-width="1" opacity="0.5" clip-path="url(#cl)"/>
<line x1="471.58" y1="192" x2="484.54" y2="537.5" stroke="#5c5cd8" stroke-width="1" opacity="0.5" clip-path="url(#cl)"/>
</g>
<rect x="43" y="192" width="967" height="345.5" filter="url(#nd)" opacity="0.9"/>
<rect x="43" y="192" width="967" height="345.5" filter="url(#nz)" opacity="0.9"/>
<text x="43.3" y="281" font-size="11" fill="#f8f820" text-anchor="start" textLength="101" lengthAdjust="spacingAndGlyphs">2013-11-09 12:51:10</text>
<text x="43.3" y="376" font-size="11" fill="#f8f820" text-anchor="start" textLength="101" lengthAdjust="spacingAndGlyphs">2013-11-09 12:51:00</text>
<text x="43.3" y="471" font-size="11" fill="#f8f820" text-anchor="start" textLength="101" lengthAdjust="spacingAndGlyphs">2013-11-09 12:50:50</text>
<rect x="1024" y="27" width="1" height="502" fill="#808080"/>
<rect x="1025" y="27" width="1" height="502" fill="#404040"/>
<rect x="1026" y="27" width="2" height="502" fill="#ffffff"/>
<rect x="1024" y="27" width="4" height="1" fill="#808080"/>
<path d="M1015.5 351.5L1020.5 346.5H1035.5V356.5H1020.5Z" fill="url(#dz)" stroke="none"/>
<path d="M1015.5 351.5L1020.5 346.5H1035" stroke="#ffffff" fill="none"/>
<path d="M1015.5 351.5L1020.5 356.5H1035.5V346.5" stroke="#404040" fill="none"/>
<path d="M1017 351.5L1021 355.5H1034.5V347.5" stroke="#808080" fill="none"/>
<rect x="52" y="537" width="58" height="16" fill="#404040"/>
<rect x="52" y="537" width="57" height="15" fill="#ffffff"/>
<rect x="53" y="538" width="56" height="14" fill="#808080"/>
<rect x="53" y="538" width="55" height="13" fill="url(#dz)"/>
<text x="80.5" y="548.5" font-size="11.5" fill="#000" text-anchor="middle" textLength="47" lengthAdjust="spacingAndGlyphs">Raw Data</text>
<rect x="112" y="537" width="46" height="16" fill="#404040"/>
<rect x="112" y="537" width="45" height="15" fill="#ffffff"/>
<rect x="113" y="538" width="44" height="14" fill="#808080"/>
<rect x="113" y="538" width="43" height="13" fill="url(#dz)"/>
<text x="134.5" y="548.5" font-size="11.5" fill="#000" text-anchor="middle" textLength="35" lengthAdjust="spacingAndGlyphs">2D Plot</text>
<rect x="159.5" y="537" width="45" height="16" fill="#404040"/>
<rect x="159.5" y="537" width="44" height="15" fill="#ffffff"/>
<rect x="160.5" y="538" width="43" height="14" fill="#808080"/>
<rect x="160.5" y="538" width="42" height="13" fill="url(#dz)"/>
<text x="181.5" y="548.5" font-size="11.5" fill="#000" text-anchor="middle" textLength="35" lengthAdjust="spacingAndGlyphs">3D Plot</text>
<rect x="206" y="537" width="63.5" height="16" fill="#404040"/>
<rect x="206" y="537" width="62.5" height="15" fill="#ffffff"/>
<rect x="207" y="538" width="61.5" height="14" fill="#808080"/>
<rect x="207" y="538" width="60.5" height="13" fill="url(#dz)"/>
<text x="237.25" y="548.5" font-size="11.5" fill="#000" text-anchor="middle" textLength="54" lengthAdjust="spacingAndGlyphs">V Waterfall</text>
<rect x="270.5" y="537" width="62" height="16" fill="#404040"/>
<rect x="270.5" y="537" width="61" height="15" fill="#ffffff"/>
<rect x="271.5" y="538" width="60" height="14" fill="#808080"/>
<rect x="271.5" y="538" width="59" height="13" fill="url(#dz)"/>
<text x="301" y="548.5" font-size="11.5" fill="#000" text-anchor="middle" textLength="54" lengthAdjust="spacingAndGlyphs">H Waterfall</text>
<rect x="382" y="537" width="58.5" height="16" fill="#404040"/>
<rect x="382" y="537" width="57.5" height="15" fill="#ffffff"/>
<rect x="383" y="538" width="56.5" height="14" fill="#808080"/>
<rect x="383" y="538" width="55.5" height="13" fill="url(#dz)"/>
<text x="410.75" y="548.5" font-size="11.5" fill="#000" text-anchor="middle" textLength="49" lengthAdjust="spacingAndGlyphs">Continuum</text>
<rect x="442" y="537" width="41" height="16" fill="#404040"/>
<rect x="442" y="537" width="40" height="15" fill="#ffffff"/>
<rect x="443" y="538" width="39" height="14" fill="#808080"/>
<rect x="443" y="538" width="38" height="13" fill="url(#dz)"/>
<text x="462" y="548.5" font-size="11.5" fill="#000" text-anchor="middle" textLength="29" lengthAdjust="spacingAndGlyphs">Phase</text>
<rect x="334" y="537" width="46.5" height="18.5" fill="#404040"/>
<rect x="334" y="537" width="45.5" height="17.5" fill="#ffffff"/>
<rect x="335" y="538" width="44.5" height="16.5" fill="#808080"/>
<rect x="335" y="538" width="43.5" height="15.5" fill="url(#dz)"/>
<text x="356.75" y="550.25" font-size="11.5" fill="#000" text-anchor="middle" textLength="34" lengthAdjust="spacingAndGlyphs">Combo</text>
<clipPath id="co"><rect x="0" y="548" width="28.6" height="14"/></clipPath>
<text x="2.5" y="560.5" font-size="11.5" fill="#000" text-anchor="start" textLength="27" lengthAdjust="spacingAndGlyphs" clip-path="url(#co)">Offset</text>
<text x="12.5" y="571.8" font-size="11.5" fill="#000" text-anchor="start">0</text>
<rect x="32.5" y="553.5" width="15" height="9" fill="#404040"/>
<rect x="32.5" y="553.5" width="14" height="8" fill="#ffffff"/>
<rect x="33.5" y="554.5" width="13" height="7" fill="#808080"/>
<rect x="33.5" y="554.5" width="12" height="6" fill="url(#dz)"/>
<path d="M39.5 556.3L41.5 558.5H37.5Z" fill="#000"/>
<rect x="32.5" y="564" width="15" height="9" fill="#404040"/>
<rect x="32.5" y="564" width="14" height="8" fill="#ffffff"/>
<rect x="33.5" y="565" width="13" height="7" fill="#808080"/>
<rect x="33.5" y="565" width="12" height="6" fill="url(#dz)"/>
<path d="M39.5 569.2L41.5 567H37.5Z" fill="#000"/>
<rect x="5.5" y="580" width="63.5" height="19.5" fill="#ffffff"/>
<rect x="5.5" y="580" width="62.5" height="18.5" fill="#808080"/>
<rect x="6.5" y="581" width="61.5" height="17.5" fill="url(#dz)"/>
<rect x="6.5" y="581" width="60.5" height="16.5" fill="#404040"/>
<rect x="7.5" y="582" width="59.5" height="15.5" fill="#ffffff"/>
<text x="37" y="593.5" font-size="11.5" fill="#000" text-anchor="middle">1</text>
<text x="74" y="594.5" font-size="11.5" fill="#000" text-anchor="start" textLength="40.5" lengthAdjust="spacingAndGlyphs">FFT Ave</text>
<rect x="7" y="604.5" width="28.5" height="20.5" fill="#ffffff"/>
<rect x="7" y="604.5" width="27.5" height="19.5" fill="#808080"/>
<rect x="8" y="605.5" width="26.5" height="18.5" fill="url(#dz)"/>
<rect x="8" y="605.5" width="25.5" height="17.5" fill="#404040"/>
<rect x="9" y="606.5" width="24.5" height="16.5" fill="url(#dz)"/>
<text x="21" y="619" font-size="11.5" fill="#000" text-anchor="middle">0</text>
<rect x="35.5" y="603.5" width="15" height="10.5" fill="#404040"/>
<rect x="35.5" y="603.5" width="14" height="9.5" fill="#ffffff"/>
<rect x="36.5" y="604.5" width="13" height="8.5" fill="#808080"/>
<rect x="36.5" y="604.5" width="12" height="7.5" fill="url(#dz)"/>
<path d="M42.5 607.05L44.5 609.25H40.5Z" fill="#000"/>
<rect x="35.5" y="615" width="15" height="10.5" fill="#404040"/>
<rect x="35.5" y="615" width="14" height="9.5" fill="#ffffff"/>
<rect x="36.5" y="616" width="13" height="8.5" fill="#808080"/>
<rect x="36.5" y="616" width="12" height="7.5" fill="url(#dz)"/>
<path d="M42.5 620.95L44.5 618.75H40.5Z" fill="#000"/>
<text x="56.8" y="619" font-size="11.5" fill="#000" text-anchor="start" textLength="49.6" lengthAdjust="spacingAndGlyphs">Smoothing</text>
<rect x="5.5" y="629.5" width="72" height="19.5" fill="#ffffff"/>
<rect x="5.5" y="629.5" width="71" height="18.5" fill="#808080"/>
<rect x="6.5" y="630.5" width="70" height="17.5" fill="url(#dz)"/>
<rect x="6.5" y="630.5" width="69" height="16.5" fill="#404040"/>
<rect x="7.5" y="631.5" width="68" height="15.5" fill="url(#dz)"/>
<text x="10" y="643.3" font-size="11.5" fill="#808080" text-anchor="start" textLength="35" lengthAdjust="spacingAndGlyphs">131072</text>
<rect x="61.5" y="631.5" width="14" height="15.5" fill="#404040"/>
<rect x="61.5" y="631.5" width="13" height="14.5" fill="#ffffff"/>
<rect x="62.5" y="632.5" width="12" height="13.5" fill="#808080"/>
<rect x="62.5" y="632.5" width="11" height="12.5" fill="url(#dz)"/>
<path d="M65 637.5H72L68.5 641.5Z" fill="#808080"/>
<text x="83.4" y="643" font-size="11.5" fill="#000" text-anchor="start" textLength="44" lengthAdjust="spacingAndGlyphs">FFT/BLK</text>
<text x="8" y="660.3" font-size="11.5" fill="#000" text-anchor="start" textLength="127.2" lengthAdjust="spacingAndGlyphs">Fs=1250000 RBW= 9.5 Hz</text>
<rect x="5.5" y="665.5" width="76" height="20" fill="#ffffff"/>
<rect x="5.5" y="665.5" width="75" height="19" fill="#808080"/>
<rect x="6.5" y="666.5" width="74" height="18" fill="url(#dz)"/>
<rect x="6.5" y="666.5" width="73" height="17" fill="#404040"/>
<rect x="7.5" y="667.5" width="72" height="16" fill="#ffffff"/>
<text x="15" y="679.3" font-size="11.5" fill="#000" text-anchor="start" textLength="43.3" lengthAdjust="spacingAndGlyphs">5 dB/Div</text>
<rect x="65.5" y="667.5" width="14" height="16" fill="#404040"/>
<rect x="65.5" y="667.5" width="13" height="15" fill="#ffffff"/>
<rect x="66.5" y="668.5" width="12" height="14" fill="#808080"/>
<rect x="66.5" y="668.5" width="11" height="13" fill="url(#dz)"/>
<path d="M69 673.5H76L72.5 677.5Z" fill="#000"/>
<text x="86.3" y="679.3" font-size="11.5" fill="#000" text-anchor="start" textLength="37" lengthAdjust="spacingAndGlyphs">V Scale</text>
<rect x="13" y="693.5" width="54" height="17" fill="#404040"/>
<rect x="13" y="693.5" width="53" height="16" fill="#ffffff"/>
<rect x="14" y="694.5" width="52" height="15" fill="#808080"/>
<rect x="14" y="694.5" width="51" height="14" fill="url(#dz)"/>
<text x="39.5" y="705.5" font-size="11.5" fill="#000" text-anchor="middle" textLength="44" lengthAdjust="spacingAndGlyphs">NCO Null</text>
<rect x="409" y="559.5" width="124.5" height="21.5" fill="#404040"/>
<rect x="409" y="559.5" width="123.5" height="20.5" fill="#ffffff"/>
<rect x="410" y="560.5" width="122.5" height="19.5" fill="#808080"/>
<rect x="410" y="560.5" width="121.5" height="18.5" fill="url(#dz)"/>
<text x="470.75" y="573.75" font-size="11.5" fill="#000" text-anchor="middle" textLength="107" lengthAdjust="spacingAndGlyphs">Center Frequency - Ins</text>
<rect x="348" y="584" width="20" height="25.5" fill="#404040"/>
<rect x="348" y="584" width="19" height="24.5" fill="#ffffff"/>
<rect x="349" y="585" width="18" height="23.5" fill="#808080"/>
<rect x="349" y="585" width="17" height="22.5" fill="url(#dz)"/>
<text x="357.5" y="600.25" font-size="11.5" fill="#000" text-anchor="middle">L</text>
<rect x="369.5" y="584.5" width="194" height="26" fill="#ffffff"/>
<rect x="369.5" y="584.5" width="193" height="25" fill="#808080"/>
<rect x="370.5" y="585.5" width="192" height="24" fill="url(#dz)"/>
<rect x="370.5" y="585.5" width="191" height="23" fill="#404040"/>
<rect x="371.5" y="586.5" width="190" height="22" fill="#000000"/>
<text x="387.3" y="606.8" font-size="24" fill="#10f030" text-anchor="start">2</text>
<text x="403.6" y="606.8" font-size="24" fill="#10f030" text-anchor="start" textLength="42" lengthAdjust="spacingAndGlyphs">250</text>
<text x="449.2" y="606.8" font-size="24" fill="#10f030" text-anchor="start" textLength="40.2" lengthAdjust="spacingAndGlyphs">000</text>
<text x="493.8" y="606.8" font-size="24" fill="#10f030" text-anchor="start" textLength="39.6" lengthAdjust="spacingAndGlyphs">000</text>
<rect x="400.7" y="604.5" width="1.3" height="4.5" fill="#10f030"/>
<rect x="446.6" y="604.6" width="1.6" height="2.2" fill="#10f030"/>
<text x="536.3" y="602.6" font-size="12" fill="#c8c8c8" text-anchor="start" textLength="24.5" lengthAdjust="spacingAndGlyphs">MHz</text>
<rect x="568" y="582.5" width="63" height="29.5" fill="#404040"/>
<rect x="568" y="582.5" width="62" height="28.5" fill="#ffffff"/>
<rect x="569" y="583.5" width="61" height="27.5" fill="#808080"/>
<rect x="569" y="583.5" width="60" height="26.5" fill="url(#dz)"/>
<text x="599" y="594.25" font-size="11.5" fill="#000" text-anchor="middle" textLength="51" lengthAdjust="spacingAndGlyphs">Auto Scale</text>
<text x="599" y="607.25" font-size="11.5" fill="#000" text-anchor="middle" textLength="14" lengthAdjust="spacingAndGlyphs">(A)</text>
<text x="463.3" y="627" font-size="11.5" fill="#000" text-anchor="middle" textLength="24" lengthAdjust="spacingAndGlyphs">Span</text>
<rect x="369.5" y="632" width="194" height="25.5" fill="#ffffff"/>
<rect x="369.5" y="632" width="193" height="24.5" fill="#808080"/>
<rect x="370.5" y="633" width="192" height="23.5" fill="url(#dz)"/>
<rect x="370.5" y="633" width="191" height="22.5" fill="#404040"/>
<rect x="371.5" y="634" width="190" height="21.5" fill="#000000"/>
<text x="396.2" y="653.3" font-size="24" fill="#10f030" text-anchor="start">1</text>
<text x="407.3" y="653.3" font-size="24" fill="#10f030" text-anchor="start">.</text>
<text x="414.8" y="653.3" font-size="24" fill="#10f030" text-anchor="start">2</text>
<text x="435.3" y="653.3" font-size="24" fill="#10f030" text-anchor="start">5</text>
<text x="453.8" y="653.3" font-size="24" fill="#10f030" text-anchor="start">0</text>
<text x="474.6" y="653.3" font-size="24" fill="#10f030" text-anchor="start">0</text>
<text x="493" y="653.3" font-size="24" fill="#10f030" text-anchor="start">0</text>
<text x="510.8" y="653.3" font-size="24" fill="#10f030" text-anchor="start">0</text>
<text x="529.7" y="649.5" font-size="12" fill="#c8c8c8" text-anchor="start" textLength="26" lengthAdjust="spacingAndGlyphs">MHz</text>
<rect x="568" y="629.5" width="63" height="29" fill="#404040"/>
<rect x="568" y="629.5" width="62" height="28" fill="#ffffff"/>
<rect x="569" y="630.5" width="61" height="27" fill="#808080"/>
<rect x="569" y="630.5" width="60" height="26" fill="url(#dz)"/>
<text x="599" y="641" font-size="11.5" fill="#000" text-anchor="middle" textLength="53" lengthAdjust="spacingAndGlyphs">Memory(M)</text>
<text x="599" y="654" font-size="11.5" fill="#000" text-anchor="middle" textLength="43" lengthAdjust="spacingAndGlyphs">Channels</text>
<rect x="369" y="667" width="59" height="22.5" fill="#404040"/>
<rect x="369" y="667" width="58" height="21.5" fill="#ffffff"/>
<rect x="370" y="668" width="57" height="20.5" fill="#808080"/>
<rect x="370" y="668" width="56" height="19.5" fill="url(#dz)"/>
<text x="398" y="681.75" font-size="11.5" fill="#000" text-anchor="middle" textLength="44" lengthAdjust="spacingAndGlyphs">Stop-F10</text>
<rect x="436" y="667" width="59.5" height="22.5" fill="#404040"/>
<rect x="436" y="667" width="58.5" height="21.5" fill="#ffffff"/>
<rect x="437" y="668" width="57.5" height="20.5" fill="#808080"/>
<rect x="437" y="668" width="56.5" height="19.5" fill="url(#dz)"/>
<text x="465.25" y="681.75" font-size="11.5" fill="#000" text-anchor="middle" textLength="50" lengthAdjust="spacingAndGlyphs">Pause-F11</text>
<rect x="505" y="667" width="59.5" height="22.5" fill="#404040"/>
<rect x="505" y="667" width="58.5" height="21.5" fill="#ffffff"/>
<rect x="506" y="668" width="57.5" height="20.5" fill="#808080"/>
<rect x="506" y="668" width="56.5" height="19.5" fill="url(#dz)"/>
<text x="535.25" y="682.75" font-size="11.5" fill="#ffffff" text-anchor="middle" textLength="44" lengthAdjust="spacingAndGlyphs">Start-F12</text>
<text x="534.25" y="681.75" font-size="11.5" fill="#808080" text-anchor="middle" textLength="44" lengthAdjust="spacingAndGlyphs">Start-F12</text>
<rect x="568" y="667" width="58.5" height="22.5" fill="#404040"/>
<rect x="568" y="667" width="57.5" height="21.5" fill="#ffffff"/>
<rect x="569" y="668" width="56.5" height="20.5" fill="#808080"/>
<rect x="569" y="668" width="55.5" height="19.5" fill="#00ffff"/>
<text x="596.75" y="681.75" font-size="11.5" fill="#000" text-anchor="middle" textLength="50" lengthAdjust="spacingAndGlyphs">Record(R)</text>
<rect x="303" y="686" width="63" height="32" fill="#404040"/>
<rect x="303" y="686" width="62" height="31" fill="#ffffff"/>
<rect x="304" y="687" width="61" height="30" fill="#808080"/>
<rect x="304" y="687" width="60" height="29" fill="url(#dz)"/>
<text x="334" y="699" font-size="11.5" fill="#000" text-anchor="middle" textLength="25" lengthAdjust="spacingAndGlyphs">Mute</text>
<text x="334" y="712" font-size="11.5" fill="#000" text-anchor="middle" textLength="47" lengthAdjust="spacingAndGlyphs">SpaceBar</text>
<text x="466" y="705" font-size="11.5" fill="#000" text-anchor="middle" textLength="65" lengthAdjust="spacingAndGlyphs">Audio Volume</text>
<rect x="374" y="710" width="182" height="1" fill="#808080"/>
<rect x="374" y="711" width="182" height="1" fill="#404040"/>
<rect x="374" y="712" width="182" height="1" fill="#ffffff"/>
<rect x="553.5" y="706.5" width="5" height="10.5" fill="#404040"/>
<rect x="553.5" y="706.5" width="4" height="9.5" fill="#ffffff"/>
<rect x="554.5" y="707.5" width="3" height="8.5" fill="#808080"/>
<rect x="554.5" y="707.5" width="2" height="7.5" fill="url(#dz)"/>
<rect x="971" y="550.5" width="49.5" height="19" fill="#404040"/>
<rect x="971" y="550.5" width="48.5" height="18" fill="#ffffff"/>
<rect x="972" y="551.5" width="47.5" height="17" fill="#808080"/>
<rect x="972" y="551.5" width="46.5" height="16" fill="url(#dz)"/>
<text x="995.25" y="563.5" font-size="11.5" fill="#000" text-anchor="middle" textLength="41" lengthAdjust="spacingAndGlyphs">-56.59dB</text>
<rect x="876" y="570" width="13.5" height="13.5" fill="#ffffff"/>
<rect x="876" y="570" width="12.5" height="12.5" fill="#808080"/>
<rect x="877" y="571" width="11.5" height="11.5" fill="url(#dz)"/>
<rect x="877" y="571" width="10.5" height="10.5" fill="#404040"/>
<rect x="878" y="572" width="9.5" height="9.5" fill="#ffffff"/>
<text x="894.4" y="581" font-size="11.5" fill="#000" text-anchor="start" textLength="51" lengthAdjust="spacingAndGlyphs">Demod On</text>
<rect x="858.5" y="588.5" width="112" height="98" fill="none" stroke="#808080"/>
<rect x="859.5" y="589.5" width="112" height="98" fill="none" stroke="#ffffff"/>
<rect x="858.5" y="588.5" width="112" height="98" fill="none" stroke="#808080"/>
<circle cx="870.5" cy="599" r="5.2" fill="url(#dz)" stroke="none"/>
<path d="M866.6 602.9A5.5 5.5 0 0 1 874.4 595.1" stroke="#808080" stroke-width="1" fill="none"/>
<path d="M867.3 602.2A4.5 4.5 0 0 1 873.7 595.8" stroke="#404040" stroke-width="1" fill="none"/>
<path d="M866.6 602.9A5.5 5.5 0 0 0 874.4 595.1" stroke="#ffffff" stroke-width="1" fill="none"/>
<text x="882.5" y="604" font-size="11.5" fill="#ffffff" text-anchor="start" textLength="15" lengthAdjust="spacingAndGlyphs">AM</text>
<text x="881.5" y="603" font-size="11.5" fill="#808080" text-anchor="start" textLength="15" lengthAdjust="spacingAndGlyphs">AM</text>
<circle cx="922" cy="599" r="5.2" fill="url(#dz)" stroke="none"/>
<path d="M918.1 602.9A5.5 5.5 0 0 1 925.9 595.1" stroke="#808080" stroke-width="1" fill="none"/>
<path d="M918.8 602.2A4.5 4.5 0 0 1 925.2 595.8" stroke="#404040" stroke-width="1" fill="none"/>
<path d="M918.1 602.9A5.5 5.5 0 0 0 925.9 595.1" stroke="#ffffff" stroke-width="1" fill="none"/>
<text x="934.7" y="604" font-size="11.5" fill="#ffffff" text-anchor="start" textLength="25" lengthAdjust="spacingAndGlyphs">WFM</text>
<text x="933.7" y="603" font-size="11.5" fill="#808080" text-anchor="start" textLength="25" lengthAdjust="spacingAndGlyphs">WFM</text>
<circle cx="870.5" cy="613.2" r="5.2" fill="url(#dz)" stroke="none"/>
<path d="M866.6 617.1A5.5 5.5 0 0 1 874.4 609.3" stroke="#808080" stroke-width="1" fill="none"/>
<path d="M867.3 616.4A4.5 4.5 0 0 1 873.7 610" stroke="#404040" stroke-width="1" fill="none"/>
<path d="M866.6 617.1A5.5 5.5 0 0 0 874.4 609.3" stroke="#ffffff" stroke-width="1" fill="none"/>
<text x="882.5" y="618.2" font-size="11.5" fill="#ffffff" text-anchor="start" textLength="14" lengthAdjust="spacingAndGlyphs">FM</text>
<text x="881.5" y="617.2" font-size="11.5" fill="#808080" text-anchor="start" textLength="14" lengthAdjust="spacingAndGlyphs">FM</text>
<circle cx="922" cy="613.2" r="5.2" fill="url(#dz)" stroke="none"/>
<path d="M918.1 617.1A5.5 5.5 0 0 1 925.9 609.3" stroke="#808080" stroke-width="1" fill="none"/>
<path d="M918.8 616.4A4.5 4.5 0 0 1 925.2 610" stroke="#404040" stroke-width="1" fill="none"/>
<path d="M918.1 617.1A5.5 5.5 0 0 0 925.9 609.3" stroke="#ffffff" stroke-width="1" fill="none"/>
<text x="934.7" y="618.2" font-size="11.5" fill="#ffffff" text-anchor="start" textLength="23" lengthAdjust="spacingAndGlyphs">NFM</text>
<text x="933.7" y="617.2" font-size="11.5" fill="#808080" text-anchor="start" textLength="23" lengthAdjust="spacingAndGlyphs">NFM</text>
<circle cx="870.5" cy="627.4" r="5.2" fill="url(#dz)" stroke="none"/>
<path d="M866.6 631.3A5.5 5.5 0 0 1 874.4 623.5" stroke="#808080" stroke-width="1" fill="none"/>
<path d="M867.3 630.6A4.5 4.5 0 0 1 873.7 624.2" stroke="#404040" stroke-width="1" fill="none"/>
<path d="M866.6 631.3A5.5 5.5 0 0 0 874.4 623.5" stroke="#ffffff" stroke-width="1" fill="none"/>
<text x="882.5" y="632.4" font-size="11.5" fill="#ffffff" text-anchor="start" textLength="19" lengthAdjust="spacingAndGlyphs">LSB</text>
<text x="881.5" y="631.4" font-size="11.5" fill="#808080" text-anchor="start" textLength="19" lengthAdjust="spacingAndGlyphs">LSB</text>
<circle cx="922" cy="627.4" r="5.2" fill="url(#dz)" stroke="none"/>
<path d="M918.1 631.3A5.5 5.5 0 0 1 925.9 623.5" stroke="#808080" stroke-width="1" fill="none"/>
<path d="M918.8 630.6A4.5 4.5 0 0 1 925.2 624.2" stroke="#404040" stroke-width="1" fill="none"/>
<path d="M918.1 631.3A5.5 5.5 0 0 0 925.9 623.5" stroke="#ffffff" stroke-width="1" fill="none"/>
<text x="934.7" y="632.4" font-size="11.5" fill="#ffffff" text-anchor="start" textLength="21" lengthAdjust="spacingAndGlyphs">USB</text>
<text x="933.7" y="631.4" font-size="11.5" fill="#808080" text-anchor="start" textLength="21" lengthAdjust="spacingAndGlyphs">USB</text>
<circle cx="870.5" cy="641.6" r="5.2" fill="url(#dz)" stroke="none"/>
<path d="M866.6 645.5A5.5 5.5 0 0 1 874.4 637.7" stroke="#808080" stroke-width="1" fill="none"/>
<path d="M867.3 644.8A4.5 4.5 0 0 1 873.7 638.4" stroke="#404040" stroke-width="1" fill="none"/>
<path d="M866.6 645.5A5.5 5.5 0 0 0 874.4 637.7" stroke="#ffffff" stroke-width="1" fill="none"/>
<text x="882.5" y="646.6" font-size="11.5" fill="#ffffff" text-anchor="start" textLength="22" lengthAdjust="spacingAndGlyphs">SAM</text>
<text x="881.5" y="645.6" font-size="11.5" fill="#808080" text-anchor="start" textLength="22" lengthAdjust="spacingAndGlyphs">SAM</text>
<circle cx="922" cy="641.6" r="5.2" fill="url(#dz)" stroke="none"/>
<path d="M918.1 645.5A5.5 5.5 0 0 1 925.9 637.7" stroke="#808080" stroke-width="1" fill="none"/>
<path d="M918.8 644.8A4.5 4.5 0 0 1 925.2 638.4" stroke="#404040" stroke-width="1" fill="none"/>
<path d="M918.1 645.5A5.5 5.5 0 0 0 925.9 637.7" stroke="#ffffff" stroke-width="1" fill="none"/>
<text x="934.7" y="646.6" font-size="11.5" fill="#ffffff" text-anchor="start" textLength="32" lengthAdjust="spacingAndGlyphs">WUSB</text>
<text x="933.7" y="645.6" font-size="11.5" fill="#808080" text-anchor="start" textLength="32" lengthAdjust="spacingAndGlyphs">WUSB</text>
<circle cx="870.5" cy="655.8" r="5.2" fill="url(#dz)" stroke="none"/>
<path d="M866.6 659.7A5.5 5.5 0 0 1 874.4 651.9" stroke="#808080" stroke-width="1" fill="none"/>
<path d="M867.3 659A4.5 4.5 0 0 1 873.7 652.6" stroke="#404040" stroke-width="1" fill="none"/>
<path d="M866.6 659.7A5.5 5.5 0 0 0 874.4 651.9" stroke="#ffffff" stroke-width="1" fill="none"/>
<text x="882.5" y="660.8" font-size="11.5" fill="#ffffff" text-anchor="start" textLength="26" lengthAdjust="spacingAndGlyphs">CW-L</text>
<text x="881.5" y="659.8" font-size="11.5" fill="#808080" text-anchor="start" textLength="26" lengthAdjust="spacingAndGlyphs">CW-L</text>
<circle cx="922" cy="655.8" r="5.2" fill="url(#dz)" stroke="none"/>
<path d="M918.1 659.7A5.5 5.5 0 0 1 925.9 651.9" stroke="#808080" stroke-width="1" fill="none"/>
<path d="M918.8 659A4.5 4.5 0 0 1 925.2 652.6" stroke="#404040" stroke-width="1" fill="none"/>
<path d="M918.1 659.7A5.5 5.5 0 0 0 925.9 651.9" stroke="#ffffff" stroke-width="1" fill="none"/>
<text x="934.7" y="660.8" font-size="11.5" fill="#ffffff" text-anchor="start" textLength="28" lengthAdjust="spacingAndGlyphs">CW-U</text>
<text x="933.7" y="659.8" font-size="11.5" fill="#808080" text-anchor="start" textLength="28" lengthAdjust="spacingAndGlyphs">CW-U</text>
<circle cx="870.5" cy="599" r="2" fill="#808080"/>
<rect x="863" y="665" width="45" height="19.5" fill="#404040"/>
<rect x="863" y="665" width="44" height="18.5" fill="#ffffff"/>
<rect x="864" y="666" width="43" height="17.5" fill="#808080"/>
<rect x="864" y="666" width="42" height="16.5" fill="url(#dz)"/>
<text x="886" y="679.25" font-size="11.5" fill="#ffffff" text-anchor="middle" textLength="31" lengthAdjust="spacingAndGlyphs">NB Off</text>
<text x="885" y="678.25" font-size="11.5" fill="#808080" text-anchor="middle" textLength="31" lengthAdjust="spacingAndGlyphs">NB Off</text>
<rect x="914" y="665" width="55.5" height="19.5" fill="#404040"/>
<rect x="914" y="665" width="54.5" height="18.5" fill="#ffffff"/>
<rect x="915" y="666" width="53.5" height="17.5" fill="#808080"/>
<rect x="915" y="666" width="52.5" height="16.5" fill="url(#dz)"/>
<text x="942.25" y="679.25" font-size="11.5" fill="#ffffff" text-anchor="middle" textLength="37" lengthAdjust="spacingAndGlyphs">Setup...</text>
<text x="941.25" y="678.25" font-size="11.5" fill="#808080" text-anchor="middle" textLength="37" lengthAdjust="spacingAndGlyphs">Setup...</text>
<rect x="981.5" y="573" width="29" height="101.5" fill="#ffffff"/>
<rect x="981.5" y="573" width="28" height="100.5" fill="#808080"/>
<rect x="982.5" y="574" width="27" height="99.5" fill="url(#dz)"/>
<rect x="982.5" y="574" width="26" height="98.5" fill="#404040"/>
<rect x="983.5" y="575" width="25" height="97.5" fill="#000000"/>
<rect x="982.5" y="574.5" width="26.5" height="99" fill="#000000"/>
<rect x="982.5" y="610" width="26.5" height="63.5" fill="#ffff00"/>
<rect x="982.5" y="580.4" width="14" height="1.4" fill="#f0f000"/>
<rect x="982.5" y="587.5" width="14" height="1.4" fill="#f0f000"/>
<rect x="982.5" y="594.6" width="14" height="1.4" fill="#f0f000"/>
<rect x="982.5" y="601.7" width="14" height="1.4" fill="#f0f000"/>
<rect x="982.5" y="608.9" width="14" height="1.4" fill="#000000"/>
<rect x="982.5" y="615.9" width="14" height="1.4" fill="#000000"/>
<rect x="982.5" y="622.9" width="14" height="1.4" fill="#000000"/>
<rect x="982.5" y="629.9" width="14" height="1.4" fill="#000000"/>
<rect x="982.5" y="636.9" width="14" height="1.4" fill="#000000"/>
<rect x="982.5" y="643.9" width="14" height="1.4" fill="#000000"/>
<rect x="982.5" y="650.9" width="14" height="1.4" fill="#000000"/>
<rect x="982.5" y="657.9" width="14" height="1.4" fill="#000000"/>
<rect x="982.5" y="664.9" width="14" height="1.4" fill="#000000"/>
<rect x="997.5" y="668.5" width="11.5" height="5" fill="#000000"/>
<rect x="999" y="670" width="9" height="3.5" fill="#00e8f8"/>
<rect x="974.5" y="680.5" width="44.5" height="19" fill="#404040"/>
<rect x="974.5" y="680.5" width="43.5" height="18" fill="#ffffff"/>
<rect x="975.5" y="681.5" width="42.5" height="17" fill="#808080"/>
<rect x="975.5" y="681.5" width="41.5" height="16" fill="url(#dz)"/>
<text x="996.25" y="693.5" font-size="11.5" fill="#000" text-anchor="middle" textLength="25" lengthAdjust="spacingAndGlyphs">Peak</text>
</svg>
</body></html>
